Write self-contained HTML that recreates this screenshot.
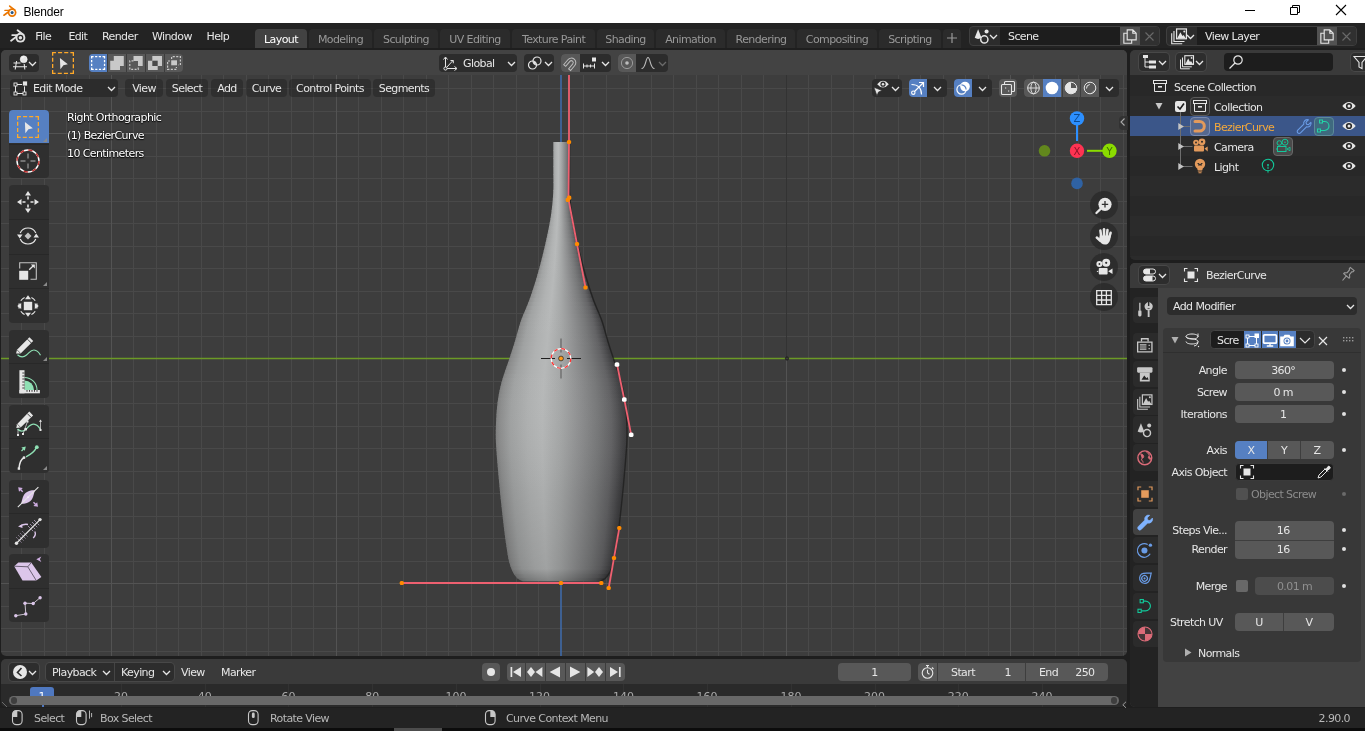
<!DOCTYPE html>
<html lang="en"><head><meta charset="utf-8"><title>Blender</title>
<style>
html,body{margin:0;padding:0;background:#1e1e1e;}
#r{position:relative;will-change:transform;width:1365px;height:731px;overflow:hidden;background:#1e1e1e;font-family:"DejaVu Sans","Liberation Sans",sans-serif;font-size:11px;letter-spacing:-0.6px;color:#e6e6e6;}
#r div,#r svg{position:absolute;box-sizing:border-box;}
#r svg{overflow:visible;}
.t{white-space:nowrap;line-height:16px;height:16px;}
.ts{white-space:nowrap;line-height:16px;height:16px;text-shadow:0 1px 1px rgba(0,0,0,.9),0 0 2px rgba(0,0,0,.8);}
.b{border-radius:4px;}
.c{text-align:center;}
.r{text-align:right;}
</style></head>
<body><div id="r">
<div style="left:0px;top:0px;width:1365px;height:23px;background:#fff;"></div>
<svg style="left:3px;top:5px;" width="14.5" height="12.8" viewBox="0 0 17 15"><g fill="none" stroke="#ea7600" stroke-linecap="round"><path d="M7.800 1.300L13.800 6" stroke-width="1.900"/><path d="M2.200 6.300H9" stroke-width="1.700"/><path d="M1.100 12L7.500 7.300" stroke-width="1.900"/></g>
<circle cx="10.700" cy="8.900" r="5.100" fill="#ea7600"/><circle cx="10.700" cy="8.900" r="3.100" fill="#ffffff"/><circle cx="10.700" cy="8.900" r="1.800" fill="#265787"/></svg>
<div class="t" style="left:23.5px;top:4px;color:#000;font-family:'Liberation Sans',sans-serif;font-size:12px;letter-spacing:-0.2px;">Blender</div>
<svg style="left:1245px;top:10px;" width="10" height="1" viewBox="0 0 10 1"><rect width="10" height="1" fill="#000"/></svg>
<svg style="left:1290px;top:5px;" width="10" height="10" viewBox="0 0 10 10"><path d="M0.5 2.5h7v7h-7z M2.5 2.5v-2h7v7h-2" fill="none" stroke="#000" stroke-width="1"/></svg>
<svg style="left:1336px;top:5px;" width="10" height="10" viewBox="0 0 10 10"><path d="M0 0L10 10M10 0L0 10" fill="none" stroke="#000" stroke-width="1.1"/></svg>
<div style="left:0px;top:23px;width:1365px;height:25px;background:#232323;"></div>
<svg style="left:9.6px;top:28.8px;" width="16.5" height="14.6" viewBox="0 0 17 15"><g fill="none" stroke="#e0e0e0" stroke-linecap="round"><path d="M7.800 1.300L13.800 6" stroke-width="1.900"/><path d="M2.200 6.300H9" stroke-width="1.700"/><path d="M1.100 12L7.500 7.300" stroke-width="1.900"/></g>
<circle cx="10.700" cy="8.900" r="5.100" fill="#e0e0e0"/><circle cx="10.700" cy="8.900" r="3.100" fill="#232323"/><circle cx="10.700" cy="8.900" r="1.800" fill="#e0e0e0"/></svg>
<div class="t" style="left:35.2px;top:29px;">File</div>
<div class="t" style="left:68.4px;top:29px;">Edit</div>
<div class="t" style="left:102px;top:29px;">Render</div>
<div class="t" style="left:152px;top:29px;">Window</div>
<div class="t" style="left:206.5px;top:29px;">Help</div>
<div style="left:255px;top:29px;width:52px;height:19px;background:#424242;border-radius:4px 4px 0 0;"></div>
<div class="t" style="left:255px;top:32px;width:52px;text-align:center;color:#ffffff;">Layout</div>
<div style="left:309px;top:29px;width:63px;height:19px;background:#2b2b2b;border-radius:4px 4px 0 0;"></div>
<div class="t" style="left:309px;top:32px;width:63px;text-align:center;color:#989898;">Modeling</div>
<div style="left:374px;top:29px;width:64px;height:19px;background:#2b2b2b;border-radius:4px 4px 0 0;"></div>
<div class="t" style="left:374px;top:32px;width:64px;text-align:center;color:#989898;">Sculpting</div>
<div style="left:440px;top:29px;width:70px;height:19px;background:#2b2b2b;border-radius:4px 4px 0 0;"></div>
<div class="t" style="left:440px;top:32px;width:70px;text-align:center;color:#989898;">UV Editing</div>
<div style="left:512px;top:29px;width:83px;height:19px;background:#2b2b2b;border-radius:4px 4px 0 0;"></div>
<div class="t" style="left:512px;top:32px;width:83px;text-align:center;color:#989898;">Texture Paint</div>
<div style="left:597px;top:29px;width:57px;height:19px;background:#2b2b2b;border-radius:4px 4px 0 0;"></div>
<div class="t" style="left:597px;top:32px;width:57px;text-align:center;color:#989898;">Shading</div>
<div style="left:656px;top:29px;width:69px;height:19px;background:#2b2b2b;border-radius:4px 4px 0 0;"></div>
<div class="t" style="left:656px;top:32px;width:69px;text-align:center;color:#989898;">Animation</div>
<div style="left:727px;top:29px;width:68px;height:19px;background:#2b2b2b;border-radius:4px 4px 0 0;"></div>
<div class="t" style="left:727px;top:32px;width:68px;text-align:center;color:#989898;">Rendering</div>
<div style="left:797px;top:29px;width:80px;height:19px;background:#2b2b2b;border-radius:4px 4px 0 0;"></div>
<div class="t" style="left:797px;top:32px;width:80px;text-align:center;color:#989898;">Compositing</div>
<div style="left:879px;top:29px;width:62px;height:19px;background:#2b2b2b;border-radius:4px 4px 0 0;"></div>
<div class="t" style="left:879px;top:32px;width:62px;text-align:center;color:#989898;">Scripting</div>
<div style="left:943px;top:29px;width:18px;height:19px;background:#2b2b2b;border-radius:4px 4px 0 0;"></div>
<svg style="left:947px;top:33px;" width="10" height="10" viewBox="0 0 10 10"><path d="M5 0v10M0 5h10" stroke="#989898" stroke-width="1.2" fill="none"/></svg>
<div style="left:969px;top:26px;width:191px;height:20px;background:#2c2c2c;border-radius:4px;border:1px solid #3f3f3f;"></div>
<div style="left:1000px;top:27px;width:120px;height:18px;background:#1d1d1d;"></div>
<div style="left:1120px;top:27px;width:20px;height:18px;background:#525252;"></div>
<div style="left:1140px;top:27px;width:19px;height:18px;background:#303030;border-radius:0 3px 3px 0;"></div>
<div style="left:0;top:0;width:0;height:0;transform-origin:981.5px 35.5px;transform:scale(1.13);"><svg style="left:973.5px;top:27.5px;" width="16" height="16" viewBox="0 0 16 16">
<path d="M4.5 2 L7.5 9.5 Q4.5 11.5 1.5 9.5 Z" fill="#e6e6e6"/>
<circle cx="10" cy="11" r="3.2" fill="none" stroke="#e6e6e6" stroke-width="1.3"/>
<circle cx="12" cy="4" r="1.8" fill="#e6e6e6"/></svg></div>
<svg style="left:989px;top:34px;" width="9" height="6" viewBox="0 0 9 6"><path d="M1 1 L4.5 4.5 L8 1" fill="none" stroke="#e6e6e6" stroke-width="1.3"/></svg>
<div class="t" style="left:1008px;top:29px;">Scene</div>
<div style="left:0;top:0;width:0;height:0;transform-origin:1130px 36px;transform:scale(1.12);"><svg style="left:1122px;top:28px;" width="16" height="16" viewBox="0 0 16 16">
<path d="M5.5 2.5h5l3 3v6h-8z M10.5 2.5v3h3" fill="none" stroke="#e6e6e6" stroke-width="1"/>
<path d="M5.5 5.5h-3v9h7v-3" fill="none" stroke="#e6e6e6" stroke-width="1"/></svg></div>
<svg style="left:1145px;top:32px;" width="9" height="9" viewBox="0 0 9 9"><path d="M0.5 0.5L8.5 8.5M8.5 0.5L0.5 8.5" stroke="#6a6a6a" stroke-width="1.1" fill="none"/></svg>
<div style="left:1166px;top:26px;width:191px;height:20px;background:#2c2c2c;border-radius:4px;border:1px solid #3f3f3f;"></div>
<div style="left:1197px;top:27px;width:120px;height:18px;background:#1d1d1d;"></div>
<div style="left:1317px;top:27px;width:20px;height:18px;background:#525252;"></div>
<div style="left:1337px;top:27px;width:19px;height:18px;background:#303030;border-radius:0 3px 3px 0;"></div>
<div style="left:0;top:0;width:0;height:0;transform-origin:1178.5px 35.5px;transform:scale(1.13);"><svg style="left:1170.5px;top:27.5px;" width="16" height="16" viewBox="0 0 16 16">
<path d="M1.500 5.500v9.300h9.300M3.500 3.500v9.300h9.300" fill="none" stroke="#e6e6e6" stroke-width="1"/>
<rect x="5.800" y="1.700" width="8.700" height="8.700" fill="#2d2d2d" stroke="#e6e6e6" stroke-width="1.100"/>
<path d="M6.400 10L9.200 4.600L11 8L12 7L13.900 10Z" fill="#e6e6e6"/><circle cx="12.600" cy="3.900" r="0.900" fill="#e6e6e6"/></svg></div>
<svg style="left:1186px;top:34px;" width="9" height="6" viewBox="0 0 9 6"><path d="M1 1 L4.5 4.5 L8 1" fill="none" stroke="#e6e6e6" stroke-width="1.3"/></svg>
<div class="t" style="left:1205px;top:29px;">View Layer</div>
<div style="left:0;top:0;width:0;height:0;transform-origin:1327px 36px;transform:scale(1.12);"><svg style="left:1319px;top:28px;" width="16" height="16" viewBox="0 0 16 16">
<path d="M5.5 2.5h5l3 3v6h-8z M10.5 2.5v3h3" fill="none" stroke="#e6e6e6" stroke-width="1"/>
<path d="M5.5 5.5h-3v9h7v-3" fill="none" stroke="#e6e6e6" stroke-width="1"/></svg></div>
<svg style="left:1342px;top:32px;" width="9" height="9" viewBox="0 0 9 9"><path d="M0.5 0.5L8.5 8.5M8.5 0.5L0.5 8.5" stroke="#6a6a6a" stroke-width="1.1" fill="none"/></svg>
<div style="left:1px;top:50px;width:1126px;height:606px;background:#3d3d3d;border-radius:5px;overflow:hidden;">
<svg style="left:0;top:0" width="1126" height="606" viewBox="1 50 1126 606"><path d="M21.5 50V656M44.5 50V656M66.5 50V656M89.5 50V656M133.5 50V656M156.5 50V656M178.5 50V656M201.5 50V656M223.5 50V656M246.5 50V656M268.5 50V656M291.5 50V656M1 88.5H1127M313.5 50V656M1 111.5H1127M358.5 50V656M1 156.5H1127M381.5 50V656M1 178.5H1127M403.5 50V656M1 201.5H1127M426.5 50V656M1 223.5H1127M448.5 50V656M1 246.5H1127M471.5 50V656M1 268.5H1127M493.5 50V656M1 291.5H1127M516.5 50V656M1 313.5H1127M538.5 50V656M1 336.5H1127M583.5 50V656M1 381.5H1127M606.5 50V656M1 403.5H1127M628.5 50V656M1 426.5H1127M651.5 50V656M1 448.5H1127M673.5 50V656M1 471.5H1127M696.5 50V656M1 493.5H1127M718.5 50V656M1 516.5H1127M741.5 50V656M1 538.5H1127M763.5 50V656M1 561.5H1127M808.5 50V656M1 606.5H1127M831.5 50V656M1 628.5H1127M853.5 50V656M1 651.5H1127M875.5 50V656M898.5 50V656M920.5 50V656M943.5 50V656M965.5 50V656M988.5 50V656M1033.5 50V656M1055.5 50V656M1078.5 50V656M1100.5 50V656M1123.5 50V656" stroke="#494949" stroke-width="1" fill="none"/><path d="M111.5 50V656M336.5 50V656M1 133.5H1127M786.5 50V656M1 583.5H1127M1010.5 50V656" stroke="#535353" stroke-width="1" fill="none"/><path d="M786.5 75V358" stroke="#333333" stroke-width="1" fill="none"/><path d="M1 358.5H1127" stroke="#6c9a26" stroke-width="1.6" fill="none"/><path d="M561 75V656" stroke="#3f6aa8" stroke-width="1.6" fill="none"/><circle cx="787" cy="358.5" r="1.6" fill="#3d3d3d" stroke="#1a1a1a" stroke-width="0.9"/><defs>
<linearGradient id="vg" x1="0" x2="1" y1="0" y2="0">
<stop offset="0" stop-color="#7a7b7b"/><stop offset="0.04" stop-color="#8c8d8d"/><stop offset="0.12" stop-color="#a0a2a2"/><stop offset="0.25" stop-color="#afb1b1"/>
<stop offset="0.36" stop-color="#b6b8b8"/><stop offset="0.5" stop-color="#a5a7a7"/><stop offset="0.65" stop-color="#8c8d8e"/><stop offset="0.78" stop-color="#767778"/>
<stop offset="0.88" stop-color="#626264"/><stop offset="0.93" stop-color="#505052"/><stop offset="0.965" stop-color="#424244"/><stop offset="1" stop-color="#38383a"/>
</linearGradient>
<linearGradient id="vg2" x1="0" x2="0" y1="0" y2="1">
<stop offset="0" stop-color="#fff" stop-opacity="0.05"/><stop offset="0.5" stop-color="#fff" stop-opacity="0"/>
<stop offset="0.8" stop-color="#000" stop-opacity="0.06"/><stop offset="0.97" stop-color="#000" stop-opacity="0.12"/><stop offset="1" stop-color="#000" stop-opacity="0.3"/>
</linearGradient>
<clipPath id="vc"><path d="M568.7 142.0 C568.7 146.7 568.7 161.5 568.7 170.0 C568.7 178.5 568.4 185.5 568.8 193.0 C569.2 200.5 570.0 208.2 571.0 215.0 C572.0 221.8 573.1 227.3 574.5 234.0 C575.9 240.7 577.5 247.8 579.3 255.0 C581.1 262.2 583.0 269.5 585.2 277.0 C587.4 284.5 590.1 292.8 592.7 300.0 C595.3 307.2 598.6 313.7 601.0 320.5 C603.4 327.3 605.1 334.7 607.0 341.0 C608.9 347.3 610.4 351.7 612.6 358.5 C614.8 365.3 618.4 374.6 620.4 382.0 C622.4 389.4 623.6 395.9 624.5 402.7 C625.4 409.5 625.8 416.2 626.0 423.0 C626.2 429.8 626.5 434.2 626.0 443.7 C625.5 453.2 624.1 468.5 623.1 480.0 C622.1 491.5 621.0 501.9 619.8 512.8 C618.6 523.7 616.9 537.4 615.7 545.6 C614.5 553.8 613.9 557.6 612.8 562.0 C611.7 566.4 610.6 569.1 609.2 571.9 C607.8 574.6 605.9 576.9 604.3 578.5 C602.6 580.1 600.1 580.8 599.3 581.3 L522.7 581.3 C521.9 580.8 519.4 580.1 517.7 578.5 C516.1 576.9 514.2 574.6 512.8 571.9 C511.4 569.1 510.3 566.4 509.2 562.0 C508.1 557.6 507.5 553.8 506.3 545.6 C505.1 537.4 503.4 523.7 502.2 512.8 C501.0 501.9 499.9 491.5 498.9 480.0 C497.9 468.5 496.5 453.2 496.0 443.7 C495.5 434.2 495.8 429.8 496.0 423.0 C496.2 416.2 496.6 409.5 497.5 402.7 C498.4 395.9 499.6 389.4 501.6 382.0 C503.6 374.6 507.2 365.3 509.4 358.5 C511.6 351.7 513.1 347.3 515.0 341.0 C516.9 334.7 518.6 327.3 521.0 320.5 C523.4 313.7 526.7 307.2 529.3 300.0 C531.9 292.8 534.6 284.5 536.8 277.0 C539.0 269.5 540.9 262.2 542.7 255.0 C544.5 247.8 546.1 240.7 547.5 234.0 C548.9 227.3 550.0 221.8 551.0 215.0 C552.0 208.2 552.8 200.5 553.2 193.0 C553.6 185.5 553.3 178.5 553.3 170.0 C553.3 161.5 553.3 146.7 553.3 142.0 Z"/></clipPath>
</defs><g clip-path="url(#vc)"><rect x="551.8" y="142" width="18.4" height="8.6" fill="url(#vg)"/><rect x="551.8" y="150" width="18.4" height="8.6" fill="url(#vg)"/><rect x="551.8" y="158" width="18.4" height="8.6" fill="url(#vg)"/><rect x="551.8" y="166" width="18.4" height="8.6" fill="url(#vg)"/><rect x="551.7" y="174" width="18.5" height="8.6" fill="url(#vg)"/><rect x="551.7" y="182" width="18.6" height="8.6" fill="url(#vg)"/><rect x="551.2" y="190" width="19.6" height="8.6" fill="url(#vg)"/><rect x="550.4" y="198" width="21.2" height="8.6" fill="url(#vg)"/><rect x="550.0" y="206" width="22.0" height="4.6" fill="url(#vg)"/><rect x="549.6" y="210" width="22.8" height="4.6" fill="url(#vg)"/><rect x="548.9" y="214" width="24.1" height="4.6" fill="url(#vg)"/><rect x="548.2" y="218" width="25.6" height="4.6" fill="url(#vg)"/><rect x="547.5" y="222" width="27.1" height="4.6" fill="url(#vg)"/><rect x="546.7" y="226" width="28.5" height="4.6" fill="url(#vg)"/><rect x="546.0" y="230" width="30.0" height="4.6" fill="url(#vg)"/><rect x="545.1" y="234" width="31.8" height="4.6" fill="url(#vg)"/><rect x="544.2" y="238" width="33.7" height="4.6" fill="url(#vg)"/><rect x="543.3" y="242" width="35.5" height="4.6" fill="url(#vg)"/><rect x="542.3" y="246" width="37.3" height="4.6" fill="url(#vg)"/><rect x="541.4" y="250" width="39.1" height="4.6" fill="url(#vg)"/><rect x="540.4" y="254" width="41.2" height="4.6" fill="url(#vg)"/><rect x="539.3" y="258" width="43.4" height="4.6" fill="url(#vg)"/><rect x="538.2" y="262" width="45.5" height="4.6" fill="url(#vg)"/><rect x="537.2" y="266" width="47.6" height="4.6" fill="url(#vg)"/><rect x="536.1" y="270" width="49.8" height="4.6" fill="url(#vg)"/><rect x="535.0" y="274" width="52.1" height="4.6" fill="url(#vg)"/><rect x="533.7" y="278" width="54.7" height="4.6" fill="url(#vg)"/><rect x="532.4" y="282" width="57.3" height="4.6" fill="url(#vg)"/><rect x="531.1" y="286" width="59.9" height="4.6" fill="url(#vg)"/><rect x="529.8" y="290" width="62.5" height="4.6" fill="url(#vg)"/><rect x="528.5" y="294" width="65.1" height="4.6" fill="url(#vg)"/><rect x="527.0" y="298" width="68.0" height="4.6" fill="url(#vg)"/><rect x="525.4" y="302" width="71.3" height="4.6" fill="url(#vg)"/><rect x="523.8" y="306" width="74.5" height="4.6" fill="url(#vg)"/><rect x="522.1" y="310" width="77.7" height="4.6" fill="url(#vg)"/><rect x="520.5" y="314" width="81.0" height="4.6" fill="url(#vg)"/><rect x="519.1" y="318" width="83.9" height="4.6" fill="url(#vg)"/><rect x="517.9" y="322" width="86.2" height="4.6" fill="url(#vg)"/><rect x="516.7" y="326" width="88.6" height="4.6" fill="url(#vg)"/><rect x="515.5" y="330" width="90.9" height="4.6" fill="url(#vg)"/><rect x="514.4" y="334" width="93.2" height="4.6" fill="url(#vg)"/><rect x="513.2" y="338" width="95.6" height="4.6" fill="url(#vg)"/><rect x="511.9" y="342" width="98.2" height="4.6" fill="url(#vg)"/><rect x="510.6" y="346" width="100.8" height="4.6" fill="url(#vg)"/><rect x="509.3" y="350" width="103.3" height="4.6" fill="url(#vg)"/><rect x="508.1" y="354" width="105.9" height="4.6" fill="url(#vg)"/><rect x="506.7" y="358" width="108.5" height="4.6" fill="url(#vg)"/><rect x="505.4" y="362" width="111.2" height="4.6" fill="url(#vg)"/><rect x="504.1" y="366" width="113.8" height="4.6" fill="url(#vg)"/><rect x="502.8" y="370" width="116.5" height="4.6" fill="url(#vg)"/><rect x="501.4" y="374" width="119.1" height="4.6" fill="url(#vg)"/><rect x="500.1" y="378" width="121.8" height="4.6" fill="url(#vg)"/><rect x="499.3" y="382" width="123.4" height="4.6" fill="url(#vg)"/><rect x="498.5" y="386" width="125.0" height="4.6" fill="url(#vg)"/><rect x="497.7" y="390" width="126.6" height="4.6" fill="url(#vg)"/><rect x="496.9" y="394" width="128.1" height="4.6" fill="url(#vg)"/><rect x="496.1" y="398" width="129.7" height="4.6" fill="url(#vg)"/><rect x="495.8" y="402" width="130.5" height="4.6" fill="url(#vg)"/><rect x="495.5" y="406" width="131.1" height="4.6" fill="url(#vg)"/><rect x="495.2" y="410" width="131.7" height="4.6" fill="url(#vg)"/><rect x="494.9" y="414" width="132.3" height="4.6" fill="url(#vg)"/><rect x="494.6" y="418" width="132.9" height="4.6" fill="url(#vg)"/><rect x="494.5" y="422" width="133.0" height="4.6" fill="url(#vg)"/><rect x="494.5" y="426" width="133.0" height="4.6" fill="url(#vg)"/><rect x="494.5" y="430" width="133.0" height="4.6" fill="url(#vg)"/><rect x="494.5" y="434" width="133.0" height="4.6" fill="url(#vg)"/><rect x="494.5" y="438" width="133.0" height="4.6" fill="url(#vg)"/><rect x="494.5" y="442" width="133.0" height="4.6" fill="url(#vg)"/><rect x="494.7" y="446" width="132.6" height="4.6" fill="url(#vg)"/><rect x="495.0" y="450" width="132.0" height="4.6" fill="url(#vg)"/><rect x="495.3" y="454" width="131.4" height="4.6" fill="url(#vg)"/><rect x="495.6" y="458" width="130.7" height="4.6" fill="url(#vg)"/><rect x="496.0" y="462" width="130.1" height="4.6" fill="url(#vg)"/><rect x="496.3" y="466" width="129.4" height="4.6" fill="url(#vg)"/><rect x="496.6" y="470" width="128.8" height="4.6" fill="url(#vg)"/><rect x="496.9" y="474" width="128.2" height="4.6" fill="url(#vg)"/><rect x="497.2" y="478" width="127.5" height="4.6" fill="url(#vg)"/><rect x="497.6" y="482" width="126.8" height="4.6" fill="url(#vg)"/><rect x="498.0" y="486" width="126.0" height="4.6" fill="url(#vg)"/><rect x="498.4" y="490" width="125.2" height="4.6" fill="url(#vg)"/><rect x="498.8" y="494" width="124.4" height="4.6" fill="url(#vg)"/><rect x="499.2" y="498" width="123.6" height="4.6" fill="url(#vg)"/><rect x="499.6" y="502" width="122.8" height="4.6" fill="url(#vg)"/><rect x="500.0" y="506" width="122.0" height="4.6" fill="url(#vg)"/><rect x="500.4" y="510" width="121.2" height="4.6" fill="url(#vg)"/><rect x="500.9" y="514" width="120.3" height="4.6" fill="url(#vg)"/><rect x="501.4" y="518" width="119.3" height="4.6" fill="url(#vg)"/><rect x="501.9" y="522" width="118.3" height="4.6" fill="url(#vg)"/><rect x="502.4" y="526" width="117.3" height="4.6" fill="url(#vg)"/><rect x="502.9" y="530" width="116.3" height="4.6" fill="url(#vg)"/><rect x="503.4" y="534" width="115.3" height="4.6" fill="url(#vg)"/><rect x="503.9" y="538" width="114.3" height="4.6" fill="url(#vg)"/><rect x="504.4" y="542" width="113.3" height="4.6" fill="url(#vg)"/><rect x="504.9" y="546" width="112.3" height="4.6" fill="url(#vg)"/><rect x="505.6" y="550" width="110.8" height="4.6" fill="url(#vg)"/><rect x="506.3" y="554" width="109.4" height="4.6" fill="url(#vg)"/><rect x="507.0" y="558" width="108.0" height="4.6" fill="url(#vg)"/><rect x="507.7" y="562" width="106.6" height="4.6" fill="url(#vg)"/><rect x="509.2" y="566" width="103.7" height="4.6" fill="url(#vg)"/><rect x="510.6" y="570" width="100.8" height="4.6" fill="url(#vg)"/><rect x="512.9" y="574" width="96.3" height="4.6" fill="url(#vg)"/><rect x="515.8" y="578" width="90.3" height="4.6" fill="url(#vg)"/><rect x="480" y="142" width="160" height="440" fill="url(#vg2)"/></g><path d="M568.7 142.0 C568.7 146.7 568.7 161.5 568.7 170.0 C568.7 178.5 568.4 185.5 568.8 193.0 C569.2 200.5 570.0 208.2 571.0 215.0 C572.0 221.8 573.1 227.3 574.5 234.0 C575.9 240.7 577.5 247.8 579.3 255.0 C581.1 262.2 583.0 269.5 585.2 277.0 C587.4 284.5 590.1 292.8 592.7 300.0 C595.3 307.2 598.6 313.7 601.0 320.5 C603.4 327.3 605.1 334.7 607.0 341.0 C608.9 347.3 610.4 351.7 612.6 358.5 C614.8 365.3 618.4 374.6 620.4 382.0 C622.4 389.4 623.6 395.9 624.5 402.7 C625.4 409.5 625.8 416.2 626.0 423.0 C626.2 429.8 626.5 434.2 626.0 443.7 C625.5 453.2 624.1 468.5 623.1 480.0 C622.1 491.5 621.0 501.9 619.8 512.8 C618.6 523.7 616.9 537.4 615.7 545.6 C614.5 553.8 613.9 557.6 612.8 562.0 C611.7 566.4 610.6 569.1 609.2 571.9 C607.8 574.6 605.9 576.9 604.3 578.5 C602.6 580.1 600.1 580.8 599.3 581.3" fill="none" stroke="#1c1c1c" stroke-width="1.4" opacity="0.75" transform="translate(0.8,0)"/><path d="M569 75 L569 142 L568.5 199.5" fill="none" stroke="#ee6070" stroke-width="1.8" stroke-linejoin="round"/><path d="M568.5 199.5 L577 244 L585.5 287.5" fill="none" stroke="#ee6070" stroke-width="1.8" stroke-linejoin="round"/><path d="M617 364.5 L624.3 399.5 L631.2 434.8" fill="none" stroke="#ee6070" stroke-width="1.8" stroke-linejoin="round"/><path d="M619.3 528 L614 558 L608.7 588" fill="none" stroke="#ee6070" stroke-width="1.8" stroke-linejoin="round"/><path d="M401.8 583 H601.3" fill="none" stroke="#ee6070" stroke-width="1.8" stroke-linejoin="round"/><rect x="566.9" y="139.9" width="4.2" height="4.2" rx="1.5" fill="#ff8a00"/><rect x="567.1" y="195.5" width="4.2" height="4.2" rx="1.5" fill="#ff8a00"/><rect x="565.6999999999999" y="197.70000000000002" width="4.2" height="4.2" rx="1.5" fill="#ff8a00"/><rect x="574.9" y="241.9" width="4.2" height="4.2" rx="1.5" fill="#ff8a00"/><rect x="583.4" y="285.4" width="4.2" height="4.2" rx="1.5" fill="#ff8a00"/><rect x="617.1999999999999" y="525.9" width="4.2" height="4.2" rx="1.5" fill="#ff8a00"/><rect x="611.9" y="555.9" width="4.2" height="4.2" rx="1.5" fill="#ff8a00"/><rect x="606.6" y="585.9" width="4.2" height="4.2" rx="1.5" fill="#ff8a00"/><rect x="399.7" y="580.9" width="4.2" height="4.2" rx="1.5" fill="#ff8a00"/><rect x="558.9" y="580.9" width="4.2" height="4.2" rx="1.5" fill="#ff8a00"/><rect x="599.1999999999999" y="580.9" width="4.2" height="4.2" rx="1.5" fill="#ff8a00"/><rect x="614.7" y="362.2" width="4.6" height="4.6" rx="1.6" fill="#ffffff"/><rect x="622.0" y="397.2" width="4.6" height="4.6" rx="1.6" fill="#ffffff"/><rect x="628.9000000000001" y="432.5" width="4.6" height="4.6" rx="1.6" fill="#ffffff"/><g fill="none"><path d="M541 358.5h14M567 358.5h14" stroke="#1e1e1e" stroke-width="1"/><path d="M561 338.5v14M561 364.5v14" stroke="#6e6e6e" stroke-width="1.4"/><circle cx="561" cy="358.5" r="9.8" stroke="#ffffff" stroke-width="1.3"/><circle cx="561" cy="358.5" r="9.8" stroke="#ff3030" stroke-width="1.3" stroke-dasharray="3.85 3.85"/><circle cx="561" cy="358.5" r="2.4" fill="#ff9a1a" stroke="#30302e" stroke-width="0.8"/></g></svg>
<div style="left:0;top:0;width:1126px;height:25px;background:#434343;"></div>
</div>
<div style="left:9px;top:54px;width:30px;height:18px;background:#2c2c2c;border-radius:4px;"></div>
<svg style="left:12px;top:55px;" width="16" height="16" viewBox="0 0 16 16"><path d="M1.500 8h7M1 11.800h14M4.600 6L3.200 14.500M12.200 9l.6 5.500" stroke="#e6e6e6" stroke-width="1.100" fill="none"/>
<circle cx="11.700" cy="4.300" r="3.500" fill="#e6e6e6"/><path d="M9.800 3.800a2 2 0 0 1 2-1.700" stroke="#fff" stroke-width="0.800" fill="none"/><circle cx="11.700" cy="4.300" r="3.500" fill="none" stroke="#fff" stroke-width="0.500"/></svg>
<svg style="left:28px;top:61px;" width="9" height="6" viewBox="0 0 9 6"><path d="M1 1 L4.5 4.5 L8 1" fill="none" stroke="#e6e6e6" stroke-width="1.3"/></svg>
<svg style="left:52px;top:52px;" width="22" height="22" viewBox="0 0 22 22"><path d="M0 0.65H22M21.35 0V22M22 21.35H0M0.65 22V0" fill="none" stroke="#ffa928" stroke-width="1.3" stroke-dasharray="3.95 2.1 4.05 2.1 4.05 2.1 3.95"/>
<path d="M7.92 5.94 L15.84 12.32 L11.440000000000001 13.2 L8.36 17.16Z" fill="#e6e6e6"/></svg>
<div style="left:89px;top:54px;width:94px;height:18px;background:#585858;border-radius:4px;"></div>
<div style="left:89px;top:54px;width:18.5px;height:18px;background:#5680c2;border-radius:4px 0 0 4px;"></div>
<div style="left:106.5px;top:54px;width:1px;height:18px;background:#3c3c3c;"></div>
<div style="left:125.5px;top:54px;width:1px;height:18px;background:#3c3c3c;"></div>
<div style="left:144.5px;top:54px;width:1px;height:18px;background:#3c3c3c;"></div>
<div style="left:163.5px;top:54px;width:1px;height:18px;background:#3c3c3c;"></div>
<svg style="left:89px;top:54px;" width="95" height="18" viewBox="0 0 95 18"><path d="M2 2.650H16.200M15.550 2V16M16.200 15.350H2M2.650 16V2" fill="none" stroke="#fff" stroke-width="1.300" stroke-dasharray="2.600 1.500 2.200 1.500 2.200 1.500 2.700"/><path d="M24.800 2h10v10h-3.800v4h-9.800v-9.300h3.600z" fill="#c8c8c8"/><path d="M44.500 2h9.200v10h-4.700v-5h-4.500z" fill="#c8c8c8"/><path d="M44.500 6.900H40.800V15.400H49.200V12.500" fill="none" stroke="#c8c8c8" stroke-width="1.200" stroke-dasharray="2 1.400"/><path d="M63.300 2h9.700v10h-4.300v4h-9.700v-9.300h4.300z" fill="#c8c8c8"/><rect x="63.300" y="6.700" width="5.400" height="5.300" fill="#4a4a4a"/><rect x="82.200" y="6.300" width="5.800" height="5" fill="#c8c8c8"/><path d="M82.600 5V2.600H91.400V11H89.500M81 7H78.600V15.400H87.400V13" fill="none" stroke="#c8c8c8" stroke-width="1.200" stroke-dasharray="2.100 1.400"/></svg>
<div style="left:439px;top:54px;width:78px;height:18px;background:#2c2c2c;border-radius:4px;"></div>
<svg style="left:441px;top:55px;" width="18" height="16" viewBox="0 0 18 16"><path d="M4.5 13.5V2.5M2.5 4.5l2-2.5l2 2.5M4.5 13.5H15.5M13.5 11.5l2.5 2l-2.5 2M5.5 12.5L12 5.5M9.5 5.5h2.8v2.8" fill="none" stroke="#e6e6e6" stroke-width="1"/>
<circle cx="4.5" cy="13.5" r="1.6" fill="#2c2c2c" stroke="#e6e6e6" stroke-width="1"/></svg>
<div class="t" style="left:463px;top:56px;">Global</div>
<svg style="left:506.5px;top:61px;" width="9" height="6" viewBox="0 0 9 6"><path d="M1 1 L4.5 4.5 L8 1" fill="none" stroke="#e6e6e6" stroke-width="1.3"/></svg>
<div style="left:524px;top:54px;width:30px;height:18px;background:#2c2c2c;border-radius:4px;"></div>
<svg style="left:527px;top:55px;" width="16" height="16" viewBox="0 0 16 16"><circle cx="5.5" cy="10" r="4" fill="none" stroke="#e6e6e6" stroke-width="1.2"/><circle cx="10" cy="6" r="4" fill="none" stroke="#e6e6e6" stroke-width="1.2"/><circle cx="7.8" cy="8" r="1.2" fill="#e6e6e6"/></svg>
<svg style="left:544px;top:61px;" width="9" height="6" viewBox="0 0 9 6"><path d="M1 1 L4.5 4.5 L8 1" fill="none" stroke="#e6e6e6" stroke-width="1.3"/></svg>
<div style="left:561px;top:54px;width:50px;height:18px;background:#2c2c2c;border-radius:4px;"></div>
<div style="left:561px;top:54px;width:19px;height:18px;background:#585858;border-radius:4px 0 0 4px;"></div>
<svg style="left:563px;top:55px;" width="16" height="16" viewBox="0 0 16 16"><g transform="rotate(40 8 8)"><path d="M3.5 14V7.5a4.5 4.5 0 0 1 9 0V14h-2.6V7.5a1.9 1.9 0 0 0-3.8 0V14Z" fill="none" stroke="#bdbdbd" stroke-width="1"/></g></svg>
<svg style="left:582px;top:55px;" width="16" height="16" viewBox="0 0 16 16"><path d="M1 11h12M1.5 8.5v5M5 9.5v3M8.5 9.5v3M12.5 8.5v5" stroke="#e6e6e6" stroke-width="1" fill="none"/><rect x="10" y="2.5" width="4" height="4" fill="#e6e6e6"/></svg>
<svg style="left:601px;top:61px;" width="9" height="6" viewBox="0 0 9 6"><path d="M1 1 L4.5 4.5 L8 1" fill="none" stroke="#e6e6e6" stroke-width="1.3"/></svg>
<div style="left:618px;top:54px;width:50px;height:18px;background:#2c2c2c;border-radius:4px;"></div>
<div style="left:618px;top:54px;width:18px;height:18px;background:#585858;border-radius:4px 0 0 4px;"></div>
<svg style="left:619px;top:55px;" width="16" height="16" viewBox="0 0 16 16"><circle cx="8" cy="8" r="5.6" fill="none" stroke="#9a9a9a" stroke-width="1"/><circle cx="8" cy="8" r="1.8" fill="#bdbdbd"/></svg>
<svg style="left:641px;top:56px;" width="14" height="14" viewBox="0 0 14 14"><path d="M0.5 12.5C5 12.5 4.5 1.5 7 1.5S9 12.5 13.5 12.5" fill="none" stroke="#bdbdbd" stroke-width="1.1"/></svg>
<svg style="left:658px;top:61px;" width="9" height="6" viewBox="0 0 9 6"><path d="M1 1 L4.5 4.5 L8 1" fill="none" stroke="#6a6a6a" stroke-width="1.3"/></svg>
<div style="left:10px;top:79px;width:108px;height:18px;background:#2c2c2c;border-radius:4px;"></div>
<svg style="left:13px;top:80px;" width="16" height="16" viewBox="0 0 16 16"><rect x="2.5" y="4.5" width="9" height="9" fill="none" stroke="#e6e6e6" stroke-width="1"/>
<rect x="1" y="3" width="3" height="3" fill="#2c2c2c" stroke="#e6e6e6" stroke-width="0.9"/><rect x="1" y="12" width="3" height="3" fill="#2c2c2c" stroke="#e6e6e6" stroke-width="0.9"/><rect x="10" y="12" width="3" height="3" fill="#2c2c2c" stroke="#e6e6e6" stroke-width="0.9"/>
<rect x="9.5" y="1" width="5" height="5" fill="#e6e6e6" stroke="#2c2c2c" stroke-width="0.8"/></svg>
<div class="t" style="left:33px;top:81px;">Edit Mode</div>
<svg style="left:107px;top:86px;" width="9" height="6" viewBox="0 0 9 6"><path d="M1 1 L4.5 4.5 L8 1" fill="none" stroke="#e6e6e6" stroke-width="1.3"/></svg>
<div style="left:125px;top:79px;width:38px;height:18px;background:rgba(36,36,36,0.55);border-radius:4px;"></div>
<div class="t" style="left:125px;top:81px;width:38px;text-align:center;">View</div>
<div style="left:166px;top:79px;width:42px;height:18px;background:rgba(36,36,36,0.55);border-radius:4px;"></div>
<div class="t" style="left:166px;top:81px;width:42px;text-align:center;">Select</div>
<div style="left:211px;top:79px;width:32px;height:18px;background:rgba(36,36,36,0.55);border-radius:4px;"></div>
<div class="t" style="left:211px;top:81px;width:32px;text-align:center;">Add</div>
<div style="left:246px;top:79px;width:41px;height:18px;background:rgba(36,36,36,0.55);border-radius:4px;"></div>
<div class="t" style="left:246px;top:81px;width:41px;text-align:center;">Curve</div>
<div style="left:289px;top:79px;width:82px;height:18px;background:rgba(36,36,36,0.55);border-radius:4px;"></div>
<div class="t" style="left:289px;top:81px;width:82px;text-align:center;">Control Points</div>
<div style="left:373px;top:79px;width:62px;height:18px;background:rgba(36,36,36,0.55);border-radius:4px;"></div>
<div class="t" style="left:373px;top:81px;width:62px;text-align:center;">Segments</div>
<div style="left:872px;top:79px;width:30px;height:18px;background:#2c2c2c;border-radius:4px;"></div>
<svg style="left:875px;top:80px;" width="16" height="16" viewBox="0 0 16 16"><path d="M2.200 4.200Q8 -2.600 13.800 4.200Q8 11 2.200 4.200Z" fill="#e6e6e6"/><circle cx="8" cy="4.200" r="2.600" fill="#2c2c2c"/><circle cx="8" cy="4.200" r="1.250" fill="#e6e6e6"/>
<path d="M-1.200 7.200l8.400 3.400l-3.700 1.400L2 15.800Z" fill="#e6e6e6" stroke="#2c2c2c" stroke-width="0.700"/></svg>
<svg style="left:891px;top:86px;" width="9" height="6" viewBox="0 0 9 6"><path d="M1 1 L4.5 4.5 L8 1" fill="none" stroke="#e6e6e6" stroke-width="1.3"/></svg>
<div style="left:909px;top:79px;width:38px;height:18px;background:#2c2c2c;border-radius:4px;"></div>
<div style="left:909px;top:79px;width:18px;height:18px;background:#5680c2;border-radius:4px 0 0 4px;"></div>
<svg style="left:910px;top:80px;" width="16" height="16" viewBox="0 0 16 16"><path d="M1.5 4.5C8 4.5 11.5 8 11.5 14.5" fill="none" stroke="#fff" stroke-width="1.2"/><path d="M4 12L13 3M9 2.5h4.5V7" fill="none" stroke="#fff" stroke-width="1.2"/><circle cx="3.3" cy="12.7" r="1.7" fill="#5680c2" stroke="#fff" stroke-width="1.1"/></svg>
<svg style="left:933px;top:86px;" width="9" height="6" viewBox="0 0 9 6"><path d="M1 1 L4.5 4.5 L8 1" fill="none" stroke="#e6e6e6" stroke-width="1.3"/></svg>
<div style="left:954px;top:79px;width:38px;height:18px;background:#2c2c2c;border-radius:4px;"></div>
<div style="left:954px;top:79px;width:18px;height:18px;background:#5680c2;border-radius:4px 0 0 4px;"></div>
<svg style="left:955px;top:80px;" width="16" height="16" viewBox="0 0 16 16"><circle cx="10" cy="6.5" r="4.8" fill="#fff"/><circle cx="6.5" cy="9.5" r="4.6" fill="none" stroke="#fff" stroke-width="1.2"/><path d="M6.5 4.9a4.6 4.6 0 0 1 4.6 4.6" fill="none" stroke="#5680c2" stroke-width="1.1"/></svg>
<svg style="left:978px;top:86px;" width="9" height="6" viewBox="0 0 9 6"><path d="M1 1 L4.5 4.5 L8 1" fill="none" stroke="#e6e6e6" stroke-width="1.3"/></svg>
<div style="left:999px;top:79px;width:18px;height:18px;background:#585858;border-radius:4px;"></div>
<svg style="left:1000px;top:80px;" width="16" height="16" viewBox="0 0 16 16"><rect x="1.5" y="4.5" width="10" height="10" rx="1" fill="none" stroke="#e6e6e6" stroke-width="1.1"/><path d="M4.5 4V2.5a1 1 0 0 1 1-1h8a1 1 0 0 1 1 1v8a1 1 0 0 1-1 1H12" fill="none" stroke="#e6e6e6" stroke-width="1.1"/><path d="M5 8h1.2M8 11h1.2" stroke="#e6e6e6" stroke-width="1.2"/></svg>
<div style="left:1024px;top:79px;width:95px;height:18px;background:#2c2c2c;border-radius:4px;"></div>
<div style="left:1024px;top:79px;width:75px;height:18px;background:#585858;border-radius:4px 0 0 4px;"></div>
<div style="left:1043px;top:79px;width:18px;height:18px;background:#5680c2;"></div>
<div style="left:1061.5px;top:79px;width:1px;height:18px;background:#3e3e3e;"></div>
<div style="left:1080px;top:79px;width:1px;height:18px;background:#3e3e3e;"></div>
<svg style="left:1024px;top:79px;" width="95" height="18" viewBox="0 0 95 18"><circle cx="9.5" cy="9" r="5.8" fill="none" stroke="#e6e6e6" stroke-width="1"/><ellipse cx="9.5" cy="9" rx="2.6" ry="5.8" fill="none" stroke="#e6e6e6" stroke-width="0.9"/><path d="M3.7 9h11.6" stroke="#e6e6e6" stroke-width="0.9"/><circle cx="28" cy="9" r="6.3" fill="#fff"/><circle cx="47" cy="9" r="5.8" fill="none" stroke="#e6e6e6" stroke-width="1"/><path d="M47 3.2A5.8 5.8 0 1 0 52.8 9H47Z" fill="#e6e6e6"/><path d="M48.5 10.5l3.2 3.2M50.5 10l2 2M48 12.5l1.6 1.6" stroke="#e6e6e6" stroke-width="0.7"/><circle cx="66" cy="9" r="5.8" fill="none" stroke="#e6e6e6" stroke-width="1"/><path d="M62.5 9.5a3.8 3.8 0 0 1 3.3-4" fill="none" stroke="#e6e6e6" stroke-width="1"/><path d="M67.5 14.2l3-3M69 14l2-2" stroke="#e6e6e6" stroke-width="0.6"/></svg>
<svg style="left:1105px;top:86px;" width="9" height="6" viewBox="0 0 9 6"><path d="M1 1 L4.5 4.5 L8 1" fill="none" stroke="#e6e6e6" stroke-width="1.3"/></svg>
<div class="ts" style="left:67px;top:110px;color:#fff;">Right Orthographic</div>
<div class="ts" style="left:67px;top:128px;color:#fff;">(1) BezierCurve</div>
<div class="ts" style="left:67px;top:146px;color:#fff;">10 Centimeters</div>
<div style="left:9px;top:110.3px;width:40px;height:68px;background:#2f2f2f;border-radius:4px;"></div>
<div style="left:9px;top:143.8px;width:40px;height:1px;background:rgba(30,30,30,0.4);"></div>
<div style="left:9px;top:110.3px;width:40px;height:33px;background:#5680c2;border-radius:4px 4px 0 0;"></div>
<svg style="left:17px;top:116.3px;" width="22" height="22" viewBox="0 0 22 22"><path d="M0 0.65H22M21.35 0V22M22 21.35H0M0.65 22V0" fill="none" stroke="#ffa928" stroke-width="1.3" stroke-dasharray="3.95 2.1 4.05 2.1 4.05 2.1 3.95"/>
<path d="M7.92 5.94 L15.84 12.32 L11.440000000000001 13.2 L8.36 17.16Z" fill="#e6e6e6"/></svg>
<svg style="left:15px;top:147.60000000000002px;" width="26" height="26" viewBox="0 0 26 26"><circle cx="13" cy="13" r="11" fill="none" stroke="#fff" stroke-width="1.4"/><circle cx="13" cy="13" r="11" fill="none" stroke="#c03030" stroke-width="1.4" stroke-dasharray="4.3 4.34"/>
<path d="M13 5.5v5M13 15.5v5M5.5 13h5M15.5 13h5" stroke="#8a8a8a" stroke-width="1.4"/></svg>
<div style="left:9px;top:185px;width:40px;height:138.0px;background:#2f2f2f;border-radius:4px;"></div>
<div style="left:9px;top:219.0px;width:40px;height:1px;background:rgba(30,30,30,0.4);"></div>
<div style="left:9px;top:253.5px;width:40px;height:1px;background:rgba(30,30,30,0.4);"></div>
<div style="left:9px;top:288.0px;width:40px;height:1px;background:rgba(30,30,30,0.4);"></div>
<svg style="left:16px;top:190.25px;" width="24" height="24" viewBox="0 0 24 24"><path d="M12 1l3 4.5h-6zM12 23l3-4.5h-6zM1 12l4.5-3v6zM23 12l-4.5-3v6z" fill="#e6e6e6"/><path d="M12 6.5v3M12 14.5v3M6.5 12h3M14.5 12h3" stroke="#e6e6e6" stroke-width="1.6"/></svg>
<svg style="left:16px;top:224.05px;" width="24" height="24" viewBox="0 0 24 24"><path d="M4.2 9A8.6 8.6 0 0 1 19.8 9M19.8 15A8.6 8.6 0 0 1 4.2 15" fill="none" stroke="#e6e6e6" stroke-width="1.2"/><path d="M1 10.5h5.5l-2.7 4zM23 13.5h-5.5l2.7-4z" fill="#e6e6e6"/><path d="M12 8.5l3.5 3.5l-3.5 3.5l-3.5-3.5z" fill="#c4c4c4"/></svg>
<svg style="left:16px;top:259.25px;" width="24" height="24" viewBox="0 0 24 24"><rect x="3.200" y="11.800" width="9" height="9" fill="#e6e6e6"/><path d="M3.700 9.500V3.700H20.300V20.300H14.500" fill="none" stroke="#c4c4c4" stroke-width="1.100"/><path d="M13.200 10.800L17.800 6.200" fill="none" stroke="#e6e6e6" stroke-width="1.300"/><path d="M14.800 5.500h4v4z" fill="#e6e6e6"/></svg>
<svg style="left:16px;top:293.75px;" width="24" height="24" viewBox="0 0 24 24"><rect x="7.800" y="7.800" width="8.400" height="8.400" fill="#e6e6e6"/><path d="M4.800 6.800A9.200 9.200 0 0 1 8.600 3.500M15.400 3.500A9.200 9.200 0 0 1 19.200 6.800M20.800 9.400A9.200 9.200 0 0 1 20.800 14.600M19.200 17.200A9.200 9.200 0 0 1 15.400 20.500M8.600 20.500A9.200 9.200 0 0 1 4.800 17.200M3.200 14.600A9.200 9.200 0 0 1 3.200 9.400" fill="none" stroke="#e6e6e6" stroke-width="1.100"/><path d="M12 1.200l3 4h-6zM12 22.800l3-4h-6zM1.200 12l4-3v6zM22.800 12l-4-3v6z" fill="#e6e6e6"/></svg>
<div style="left:9px;top:329.5px;width:40px;height:68px;background:#2f2f2f;border-radius:4px;"></div>
<div style="left:9px;top:363.0px;width:40px;height:1px;background:rgba(30,30,30,0.4);"></div>
<svg style="left:15px;top:334.5px;" width="26" height="24" viewBox="0 0 26 24"><path d="M1.100 18.400L2 14.800L14.400 2.200L18.200 6L5.600 18.400Z" fill="#e6e6e6"/><path d="M12.500 4.200L16.300 8" stroke="#2f2f2f" stroke-width="0.900"/><path d="M2.100 14.900L5.500 18.300" stroke="#2f2f2f" stroke-width="0.600"/><path d="M2.500 19.800C5 22 8.500 22.500 11.500 20S16 14.800 19 15S24 17.500 25.500 20.200" fill="none" stroke="#8fe0b4" stroke-width="1.200"/></svg>
<svg style="left:16px;top:367.5px;" width="24" height="26" viewBox="0 0 24 26"><path d="M8.500 22V12.500A9.500 9.500 0 0 1 18 22Z" fill="#8fe0b4"/><path d="M8.500 9.500A12.500 12.500 0 0 1 21 22" fill="none" stroke="#8fe0b4" stroke-width="1.100"/>
<path d="M3.400 2.200h5.100v23.100h-5.100z" fill="#e6e6e6"/><path d="M3.400 22h20.500v3.300H3.400z" fill="#e6e6e6"/><path d="M6.300 5h2.200M6.300 8h2.200M6.300 11h2.200M6.300 14h2.200M6.300 17h2.200M6.300 20h2.200M11 22v1.800M13.500 22v1.800M16 22v1.800M18.500 22v1.800M21 22v1.800" stroke="#2f2f2f" stroke-width="0.900"/></svg>
<div style="left:9px;top:404.8px;width:40px;height:68px;background:#2f2f2f;border-radius:4px;"></div>
<div style="left:9px;top:438.3px;width:40px;height:1px;background:rgba(30,30,30,0.4);"></div>
<svg style="left:15px;top:408.8px;" width="26" height="26" viewBox="0 0 26 26"><path d="M1.3 18.9L2 15.2L14.3 2.6L18.1 6.4L5.6 18.6Z" fill="#e6e6e6"/><path d="M12.3 4.6L16.1 8.4" stroke="#2f2f2f" stroke-width="0.9"/><path d="M2.2 15L5.8 18.6" stroke="#2f2f2f" stroke-width="0.6"/>
<path d="M2.500 20C5 22.600 8.500 22.800 11 20.300S15.500 15 18.800 15.200S24 18 25.500 20.500" fill="none" stroke="#8fe0b4" stroke-width="1.300"/>
<path d="M3 20.500V26M8 25L12.500 12.500M25.500 12V21" stroke="#e6e6e6" stroke-width="0.700" fill="none"/>
<g fill="#e6e6e6"><rect x="2" y="25" width="2" height="2"/><rect x="7" y="24" width="2" height="2"/><rect x="9.600" y="19" width="2.400" height="2.400"/><rect x="11.500" y="11.500" width="2" height="2"/><rect x="24.500" y="20" width="2" height="2"/><path d="M25.500 10.500l1.500 2.200h-3z"/></g></svg>
<svg style="left:15px;top:442.8px;" width="26" height="26" viewBox="0 0 26 26"><path d="M9 14.700C6 16 4.500 20 3.900 25.600" fill="none" stroke="#e6e6e6" stroke-width="1.500"/><path d="M11 13.800C15 12 19.500 8.500 21.800 4.200" fill="none" stroke="#8fe0b4" stroke-width="1.400"/><circle cx="21.800" cy="4.200" r="1.900" fill="#8fe0b4"/><circle cx="9" cy="14.700" r="1.400" fill="#e6e6e6"/><rect x="2.700" y="24.400" width="2.400" height="2.400" fill="#e6e6e6"/><path d="M10.800 3.400L9.800 7.800L6.400 4.400Z" fill="#8fe0b4"/><path d="M6.500 8L8.500 6" stroke="#8fe0b4" stroke-width="1.300"/></svg>
<div style="left:9px;top:479.7px;width:40px;height:68px;background:#2f2f2f;border-radius:4px;"></div>
<div style="left:9px;top:513.2px;width:40px;height:1px;background:rgba(30,30,30,0.4);"></div>
<svg style="left:15px;top:483.7px;" width="26" height="26" viewBox="0 0 26 26"><path d="M6 20C7.500 15.500 7.500 10.500 12 8S18 6.500 20 6C18.500 10.500 18.500 15.500 14 18S8 19.500 6 20Z" fill="#dcc6ea"/><path d="M2.800 23.200L23.400 3.200" stroke="#e6e6e6" stroke-width="1.100"/><circle cx="13" cy="13.200" r="1" fill="#f3eaf8"/><path d="M3.200 3.200l4.600 .800l-3.800 3.800zM23 22.800l-4.600-.800l3.800-3.800z" fill="#cfaee2"/><path d="M5.500 5.500l2.200 2.200M20.700 20.500l-2.200-2.200" stroke="#cfaee2" stroke-width="1.400"/></svg>
<svg style="left:15px;top:517.7px;" width="26" height="26" viewBox="0 0 26 26"><g stroke="#dcc6ea" stroke-width="0.900" stroke-dasharray="1 0.900"><path d="M1.500 19.500l5.500 5.500M3.500 17.500l5.500 5.500M5.500 15.500l5.500 5.500M7.500 13.500l5.500 5.500M15 6l5.500 5.500M17 4l5.500 5.500M19 2l5.500 5.500M13 8l5.500 5.500"/></g><path d="M1.500 25.200L25 1.600" stroke="#e6e6e6" stroke-width="1.300"/><circle cx="1.500" cy="25.200" r="1.700" fill="#e6e6e6"/><circle cx="25" cy="1.600" r="1.700" fill="#e6e6e6"/><path d="M5 8C7.500 6.500 10 6 13 6.500M19.800 13.500c1 2 .5 4.500-1.600 6.500" fill="none" stroke="#dcc6ea" stroke-width="1.400"/><path d="M3 8.600l4.200-2.400l.3 3.900z" fill="#dcc6ea"/></svg>
<div style="left:9px;top:554.3px;width:40px;height:68px;background:#2f2f2f;border-radius:4px;"></div>
<div style="left:9px;top:587.8px;width:40px;height:1px;background:rgba(30,30,30,0.4);"></div>
<svg style="left:14px;top:558.3px;" width="28" height="26" viewBox="0 0 28 26"><path d="M0.200 8.200L4.300 4.600H17.200L27.400 19L22.300 22.600H8.500Z" fill="#dcc6ea"/><path d="M0.200 8.200L13.800 8.800L22.300 22.600M13.800 8.800L17.200 4.600" fill="none" stroke="#3a3340" stroke-width="0.700"/><path d="M22.300 1.200l5-2.800l-1.400 2.800l1.400 2.800z" fill="#cfaee2"/></svg>
<svg style="left:15px;top:594.3px;" width="26" height="22" viewBox="0 0 26 22"><path d="M0.800 21.700L10.800 20L10 9.200L18.200 9.500L25.100 3.700" fill="none" stroke="#d8d0dc" stroke-width="0.900"/><g fill="#dcc6ea"><circle cx="0.800" cy="21.700" r="1.700"/><circle cx="10.800" cy="20" r="1.700"/><circle cx="10" cy="9.200" r="1.700"/><circle cx="18.200" cy="9.500" r="1.700"/><circle cx="25.100" cy="3.700" r="1.700"/></g></svg>
<svg style="left:43px;top:137.5px;" width="4" height="4" viewBox="0 0 4 4"><path d="M4 0V4H0Z" fill="#8a8a8a"/></svg>
<svg style="left:43px;top:282px;" width="4" height="4" viewBox="0 0 4 4"><path d="M4 0V4H0Z" fill="#8a8a8a"/></svg>
<svg style="left:43px;top:357px;" width="4" height="4" viewBox="0 0 4 4"><path d="M4 0V4H0Z" fill="#8a8a8a"/></svg>
<svg style="left:43px;top:466px;" width="4" height="4" viewBox="0 0 4 4"><path d="M4 0V4H0Z" fill="#8a8a8a"/></svg>
<svg style="left:0;top:0" width="1365" height="731"><path d="M1077 141V125" stroke="#2c8fff" stroke-width="2" fill="none"/><path d="M1087 150.800H1103" stroke="#8bdc00" stroke-width="2" fill="none"/><circle cx="1044.500" cy="150.800" r="5.800" fill="#62871d"/><circle cx="1077" cy="183.400" r="5.800" fill="#2f62a3"/><circle cx="1077" cy="118.400" r="7.200" fill="#2c8fff"/><circle cx="1109.500" cy="150.800" r="7.200" fill="#8bdc00"/><circle cx="1077" cy="150.800" r="7.200" fill="#ff3352"/><text x="1077" y="122.2" text-anchor="middle" font-size="10" font-family="DejaVu Sans,sans-serif" fill="#0b4a90" letter-spacing="0">Z</text><text x="1109.5" y="154.60000000000002" text-anchor="middle" font-size="10" font-family="DejaVu Sans,sans-serif" fill="#3f6f00" letter-spacing="0">Y</text><text x="1077" y="154.60000000000002" text-anchor="middle" font-size="10" font-family="DejaVu Sans,sans-serif" fill="#8c1228" letter-spacing="0">X</text></svg>
<div style="left:1090.3px;top:191.3px;width:28px;height:28px;background:rgba(40,40,40,0.75);border-radius:14px;"></div>
<svg style="left:1094.3px;top:195.3px;" width="20" height="20" viewBox="0 0 20 20"><circle cx="11" cy="9.300" r="6.600" fill="#e6e6e6"/><path d="M6.600 13.900L2.400 18" stroke="#e6e6e6" stroke-width="2.200" stroke-linecap="round"/><path d="M7.800 9.300h6.400M11 6.100v6.400" stroke="#303030" stroke-width="1.300"/></svg>
<div style="left:1090.3px;top:222.0px;width:28px;height:28px;background:rgba(40,40,40,0.75);border-radius:14px;"></div>
<svg style="left:1094.3px;top:226.0px;" width="20" height="20" viewBox="0 0 20 20"><g stroke="#e6e6e6" stroke-width="2.500" stroke-linecap="round" fill="none"><path d="M15.400 11L16.600 6.800"/><path d="M12.800 10L13.500 4"/><path d="M10 10V3.200"/><path d="M7.200 10.500L6.400 4.600"/><path d="M6.300 14.800L2.800 11.500"/></g><path d="M5.700 9.500H16.700C16.700 14.500 14.800 18.600 11 18.600C8 18.600 6.200 16.500 5 13.500Z" fill="#e6e6e6"/></svg>
<div style="left:1090.3px;top:252.7px;width:28px;height:28px;background:rgba(40,40,40,0.75);border-radius:14px;"></div>
<svg style="left:1094.3px;top:256.7px;" width="20" height="20" viewBox="0 0 20 20"><circle cx="5.400" cy="7" r="3" fill="#e6e6e6"/><circle cx="12.200" cy="5.800" r="4" fill="#e6e6e6"/><rect x="4.800" y="11" width="8.800" height="6.600" rx="0.800" fill="#e6e6e6"/><path d="M14.200 14.300l4.300-2.800v5.600z" fill="#e6e6e6"/><path d="M4.300 13.500l-1.800 .900l1.800 .900z" fill="#e6e6e6"/><circle cx="12.200" cy="5.800" r="1.100" fill="#303030"/><circle cx="5.400" cy="7" r="0.900" fill="#303030"/></svg>
<div style="left:1090.3px;top:283.4px;width:28px;height:28px;background:rgba(40,40,40,0.75);border-radius:14px;"></div>
<svg style="left:1096.3px;top:289.7px;" width="16" height="15.4" viewBox="0 0 16 15.4"><path d="M0.700 0.700h14.600v14H0.700zM0.700 5.400h14.600M0.700 10h14.600M5.600 0.700v14M10.400 0.700v14" fill="none" stroke="#e6e6e6" stroke-width="1.300"/></svg>
<div style="left:1119px;top:115.5px;width:9px;height:14.5px;background:rgba(48,48,48,0.8);border-radius:4px 0 0 4px;"></div>
<svg style="left:1120px;top:118px;" width="5" height="8" viewBox="0 0 5 8"><path d="M4.5 0.5L1 4L4.5 7.5" fill="none" stroke="#aaa" stroke-width="1.1"/></svg>
<div style="left:1130px;top:50px;width:241px;height:210px;background:#282828;border-radius:5px;overflow:hidden;">
<div style="left:0px;top:0px;width:241px;height:25px;background:#3a3a3a;"></div>
<div style="left:0px;top:46px;width:241px;height:20px;background:#2b2b2b;"></div>
<div style="left:0px;top:86px;width:241px;height:20px;background:#2b2b2b;"></div>
<div style="left:0px;top:126px;width:241px;height:20px;background:#2b2b2b;"></div>
<div style="left:0px;top:166px;width:241px;height:20px;background:#2b2b2b;"></div>
<div style="left:0px;top:206px;width:241px;height:20px;background:#2b2b2b;"></div>
<div style="left:0px;top:66px;width:241px;height:20px;background:#3b5689;"></div>
</div>
<div style="left:1139px;top:52.7px;width:30px;height:18.6px;background:#2d2d2d;border-radius:4px;box-shadow:0 0 0 1px rgba(255,255,255,0.075);"></div>
<svg style="left:1142px;top:54px;" width="16" height="16" viewBox="0 0 16 16"><rect x="1" y="1" width="5" height="3" fill="#e6e6e6"/><rect x="7" y="6.500" width="7" height="3" fill="#e6e6e6"/><rect x="7" y="11.500" width="7" height="3" fill="#e6e6e6"/><path d="M3 4v9h4M3 8h4" fill="none" stroke="#e6e6e6" stroke-width="1"/></svg>
<svg style="left:1158px;top:60px;" width="9" height="6" viewBox="0 0 9 6"><path d="M1 1 L4.5 4.5 L8 1" fill="none" stroke="#e6e6e6" stroke-width="1.3"/></svg>
<div style="left:1176px;top:52.7px;width:30px;height:18.6px;background:#2d2d2d;border-radius:4px;box-shadow:0 0 0 1px rgba(255,255,255,0.075);"></div>
<svg style="left:1179px;top:54px;" width="16" height="16" viewBox="0 0 16 16">
<path d="M1.500 5.500v9.300h9.300M3.500 3.500v9.300h9.300" fill="none" stroke="#e6e6e6" stroke-width="1"/>
<rect x="5.800" y="1.700" width="8.700" height="8.700" fill="#2d2d2d" stroke="#e6e6e6" stroke-width="1.100"/>
<path d="M6.400 10L9.200 4.600L11 8L12 7L13.900 10Z" fill="#e6e6e6"/><circle cx="12.600" cy="3.900" r="0.900" fill="#e6e6e6"/></svg>
<svg style="left:1195px;top:60px;" width="9" height="6" viewBox="0 0 9 6"><path d="M1 1 L4.5 4.5 L8 1" fill="none" stroke="#e6e6e6" stroke-width="1.3"/></svg>
<div style="left:1224px;top:53px;width:109px;height:18px;background:#1d1d1d;border-radius:4px;"></div>
<svg style="left:1228px;top:54px;" width="16" height="16" viewBox="0 0 16 16"><circle cx="10" cy="6" r="4.200" fill="none" stroke="#e6e6e6" stroke-width="1.200"/><path d="M7 9L1.500 14.500" stroke="#e6e6e6" stroke-width="1.300"/></svg>
<div style="left:1351px;top:52.7px;width:20px;height:18.6px;background:#2d2d2d;border-radius:4px;box-shadow:0 0 0 1px rgba(255,255,255,0.075);"></div>
<svg style="left:1353px;top:54px;" width="16" height="16" viewBox="0 0 16 16"><path d="M1 2.500h13l-5 6v6l-3-1.500v-4.500z" fill="none" stroke="#e6e6e6" stroke-width="1.100"/></svg>
<svg style="left:1170px;top:100px;" width="40" height="80" viewBox="0 0 40 80"><path d="M10.500 12v54.500M10.500 26.500h12M10.500 46.500h12M10.500 66.500h12" fill="none" stroke="#6e6e6e" stroke-width="1"/><path d="M8.300 23l5.600 3.500l-5.600 3.500zM8.300 43l5.600 3.500l-5.600 3.500zM8.300 63l5.600 3.500l-5.600 3.500z" fill="#c4c4c4"/></svg>
<svg style="left:1152px;top:78px;" width="16" height="16" viewBox="0 0 16 16"><rect x="1.500" y="2.500" width="13" height="3" fill="none" stroke="#e6e6e6" stroke-width="1"/><path d="M2.500 5.500v8h11v-8" fill="none" stroke="#e6e6e6" stroke-width="1"/><rect x="6" y="8" width="4" height="1.600" fill="#e6e6e6"/></svg>
<div class="t" style="left:1174px;top:80px;">Scene Collection</div>
<svg style="left:1155px;top:102px;" width="8" height="8" viewBox="0 0 8 8"><path d="M0.500 1h7L4 7.500z" fill="#c8c8c8"/></svg>
<div style="left:1175px;top:101px;width:11px;height:11px;background:#e6e6e6;border-radius:2px;"></div>
<svg style="left:1176px;top:102px;" width="9" height="9" viewBox="0 0 9 9"><path d="M1.500 4.500l2.500 2.500l4-5.500" fill="none" stroke="#1d1d1d" stroke-width="1.600"/></svg>
<div style="left:1190px;top:97px;width:20px;height:19px;background:#303030;border:1px solid #5a5a5a;border-radius:4px;"></div>
<svg style="left:1192px;top:98px;" width="16" height="16" viewBox="0 0 16 16"><rect x="1.500" y="2.500" width="13" height="3" fill="none" stroke="#e6e6e6" stroke-width="1"/><path d="M2.500 5.500v8h11v-8" fill="none" stroke="#e6e6e6" stroke-width="1"/><rect x="6" y="8" width="4" height="1.600" fill="#e6e6e6"/></svg>
<div class="t" style="left:1214px;top:100px;">Collection</div>
<svg style="left:1342px;top:101px;" width="14" height="10" viewBox="0 0 14 10">
<path d="M0.3 5 Q7 -3.2 13.7 5 Q7 13.2 0.3 5Z" fill="#e6e6e6"/>
<circle cx="7" cy="5" r="3.1" fill="#282828"/><circle cx="7" cy="5" r="1.5" fill="#e6e6e6"/></svg>
<div style="left:1190px;top:117px;width:20px;height:19px;background:#55688f;border:1px solid #7a8bb0;border-radius:4px;"></div>
<svg style="left:1192px;top:118px;" width="16" height="16" viewBox="0 0 16 16"><path d="M3 3.500h4.500a4.800 4.800 0 0 1 0 9.600H3" fill="none" stroke="#e39a5c" stroke-width="3" stroke-linecap="round"/></svg>
<div class="t" style="left:1214px;top:120px;color:#f5a93b;">BezierCurve</div>
<svg style="left:1296px;top:118px;" width="16" height="16" viewBox="0 0 16 16"><path d="M1.800 12.200l6-6a3.600 3.600 0 0 1 4.600-4.400l-2.400 2.400l.5 2l2 .5l2.400-2.400a3.600 3.600 0 0 1-4.400 4.600l-6 6a1.900 1.900 0 0 1-2.700-2.700z" fill="none" stroke="#6a9ce6" stroke-width="1.1" stroke-linejoin="round"/></svg>
<div style="left:1314px;top:117px;width:20px;height:19px;background:#3f6a7f;border:1px solid #5d8a99;border-radius:4px;"></div>
<svg style="left:1316px;top:118px;" width="16" height="16" viewBox="0 0 16 16"><path d="M6 3.500h2.500a4.500 4.500 0 0 1 0 9H4.500" fill="none" stroke="#22d4a8" stroke-width="1.100"/><rect x="3.500" y="2" width="3" height="3" fill="none" stroke="#22d4a8" stroke-width="1"/><rect x="1.500" y="11" width="3" height="3" fill="none" stroke="#22d4a8" stroke-width="1"/></svg>
<svg style="left:1342px;top:121px;" width="14" height="10" viewBox="0 0 14 10">
<path d="M0.3 5 Q7 -3.2 13.7 5 Q7 13.2 0.3 5Z" fill="#e6e6e6"/>
<circle cx="7" cy="5" r="3.1" fill="#282828"/><circle cx="7" cy="5" r="1.5" fill="#e6e6e6"/></svg>
<svg style="left:1192px;top:138px;" width="16" height="16" viewBox="0 0 16 16"><circle cx="4" cy="4.500" r="2.800" fill="#e39a5c"/><circle cx="10" cy="3.800" r="3.400" fill="#e39a5c"/><rect x="2" y="7.500" width="10" height="6" rx="1" fill="#e39a5c"/><path d="M12.500 10.500l3.200-2v5z" fill="#e39a5c"/><circle cx="10" cy="3.800" r="1" fill="#282828"/><circle cx="4" cy="4.500" r="0.900" fill="#282828"/></svg>
<div class="t" style="left:1214px;top:140px;">Camera</div>
<div style="left:1273px;top:137px;width:20px;height:19px;background:#4a4a4a;border:1px solid #686868;border-radius:4px;"></div>
<svg style="left:1275px;top:138px;" width="16" height="16" viewBox="0 0 16 16"><circle cx="4.300" cy="5" r="2.300" fill="none" stroke="#12c89a" stroke-width="1"/><circle cx="10" cy="4.200" r="3" fill="none" stroke="#12c89a" stroke-width="1"/><circle cx="10" cy="4.200" r="0.800" fill="#12c89a"/><rect x="2.500" y="8.500" width="8.500" height="5" fill="none" stroke="#12c89a" stroke-width="1"/><path d="M12 11l3-1.800v3.600z" fill="none" stroke="#12c89a" stroke-width="0.900"/><path d="M2.500 11h-1.500" stroke="#12c89a" stroke-width="1"/></svg>
<svg style="left:1342px;top:141px;" width="14" height="10" viewBox="0 0 14 10">
<path d="M0.3 5 Q7 -3.2 13.7 5 Q7 13.2 0.3 5Z" fill="#e6e6e6"/>
<circle cx="7" cy="5" r="3.1" fill="#282828"/><circle cx="7" cy="5" r="1.5" fill="#e6e6e6"/></svg>
<svg style="left:1192px;top:158px;" width="16" height="16" viewBox="0 0 16 16"><circle cx="8" cy="6" r="5.200" fill="#e39a5c"/><path d="M5.500 10h5v2h-5z" fill="#e39a5c"/><path d="M5.800 13h4.400M6.500 14.800h3" stroke="#e39a5c" stroke-width="1.100"/><path d="M5.500 5.500h1.500v2.500M10.500 5.500h-1.500v2.500M6.500 6.500h3" stroke="#282828" stroke-width="0.900" fill="none"/></svg>
<div class="t" style="left:1214px;top:160px;">Light</div>
<svg style="left:1260px;top:158px;" width="16" height="16" viewBox="0 0 16 16"><circle cx="8" cy="7" r="5.700" fill="none" stroke="#12c89a" stroke-width="1.100"/><circle cx="8" cy="7" r="1" fill="#12c89a"/><path d="M8 8.500v7.500" stroke="#12c89a" stroke-width="1" stroke-dasharray="2.500 1.200"/></svg>
<svg style="left:1342px;top:161px;" width="14" height="10" viewBox="0 0 14 10">
<path d="M0.3 5 Q7 -3.2 13.7 5 Q7 13.2 0.3 5Z" fill="#e6e6e6"/>
<circle cx="7" cy="5" r="3.1" fill="#282828"/><circle cx="7" cy="5" r="1.5" fill="#e6e6e6"/></svg>
<div style="left:1130px;top:263px;width:241px;height:443.500px;background:#424242;border-radius:5px 0 0 5px;overflow:hidden;">
<div style="left:0px;top:0px;width:241px;height:25px;background:#3a3a3a;"></div>
<div style="left:0px;top:25px;width:28px;height:420px;background:#232323;"></div>
<div style="left:2.5px;top:34px;width:25.5px;height:26px;background:#2b2b2b;border-radius:4px 0 0 4px;"></div>
<div style="left:2.5px;top:69.6px;width:25.5px;height:26.2px;background:#2b2b2b;border-radius:4px 0 0 4px;"></div>
<div style="left:2.5px;top:97.55px;width:25.5px;height:26.2px;background:#2b2b2b;border-radius:4px 0 0 4px;"></div>
<div style="left:2.5px;top:125.5px;width:25.5px;height:26.2px;background:#2b2b2b;border-radius:4px 0 0 4px;"></div>
<div style="left:2.5px;top:153.45px;width:25.5px;height:26.2px;background:#2b2b2b;border-radius:4px 0 0 4px;"></div>
<div style="left:2.5px;top:181.39999999999998px;width:25.5px;height:26.2px;background:#2b2b2b;border-radius:4px 0 0 4px;"></div>
<div style="left:2.5px;top:217.6px;width:25.5px;height:26px;background:#2b2b2b;border-radius:4px 0 0 4px;"></div>
<div style="left:2.5px;top:245.65px;width:25.5px;height:26px;background:#424242;border-radius:4px 0 0 4px;"></div>
<div style="left:2.5px;top:273.7px;width:25.5px;height:26px;background:#2b2b2b;border-radius:4px 0 0 4px;"></div>
<div style="left:2.5px;top:301.75px;width:25.5px;height:26px;background:#2b2b2b;border-radius:4px 0 0 4px;"></div>
<div style="left:2.5px;top:329.8px;width:25.5px;height:26px;background:#2b2b2b;border-radius:4px 0 0 4px;"></div>
<div style="left:2.5px;top:357.85px;width:25.5px;height:26px;background:#2b2b2b;border-radius:4px 0 0 4px;"></div>
<div style="left:33px;top:65px;width:198px;height:334px;background:#383838;border-radius:4px;"></div>
<div style="left:33px;top:89px;width:198px;height:1px;background:#2f2f2f;"></div>
</div>
<div style="left:1139px;top:265.7px;width:30px;height:18.6px;background:#2d2d2d;border-radius:4px;box-shadow:0 0 0 1px rgba(255,255,255,0.075);"></div>
<svg style="left:1142px;top:267px;" width="16" height="16" viewBox="0 0 16 16"><rect x="1.500" y="2" width="12" height="5" rx="2.500" fill="none" stroke="#e6e6e6" stroke-width="1"/><rect x="1.500" y="9" width="12" height="5" rx="2.500" fill="none" stroke="#e6e6e6" stroke-width="1"/><path d="M4 2h4v5H4a2.500 2.500 0 0 1 0-5zM4 9h6.500v5H4a2.500 2.500 0 0 1 0-5z" fill="#e6e6e6"/></svg>
<svg style="left:1158px;top:273px;" width="9" height="6" viewBox="0 0 9 6"><path d="M1 1 L4.5 4.5 L8 1" fill="none" stroke="#e6e6e6" stroke-width="1.3"/></svg>
<svg style="left:1183px;top:267px;" width="16" height="16" viewBox="0 0 16 16"><rect x="4.500" y="4.500" width="7" height="7" fill="#e6e6e6"/><path d="M1.500 4.500v-3h3M11.500 1.500h3v3M14.500 11.500v3h-3M4.500 14.500h-3v-3" fill="none" stroke="#e6e6e6" stroke-width="1.100"/></svg>
<div class="t" style="left:1206px;top:268px;">BezierCurve</div>
<svg style="left:1340px;top:266px;" width="16" height="18" viewBox="0 0 16 18"><g transform="rotate(40 8 8)"><path d="M5.500 1.500h5v1.500l-1 1v3.500l2 2v1h-7v-1l2-2V4l-1-1zM8 10.500v6" fill="none" stroke="#9a9a9a" stroke-width="1.100"/></g></svg>
<svg style="left:1136.2px;top:301.2px;" width="17.6" height="17.6" viewBox="0 0 16 16"><path d="M3.500 1.500v7" stroke="#c8c8c8" stroke-width="1.200"/><rect x="2" y="8.500" width="3" height="5.500" rx="1.200" fill="#c8c8c8"/><path d="M11.500 14.500V8a3 3 0 0 1-1.500-5.500v3h3v-3A3 3 0 0 1 11.500 8" fill="none" stroke="#c8c8c8" stroke-width="1.700"/></svg>
<svg style="left:1136.2px;top:336.2px;" width="17.6" height="17.6" viewBox="0 0 16 16"><path d="M1.500 5.500h13v9h-13z" fill="none" stroke="#c8c8c8" stroke-width="1.200"/><path d="M5 5V2.500h6V5" fill="none" stroke="#c8c8c8" stroke-width="1.200"/><path d="M3.500 8h6M3.500 10h6M3.500 12h6M12 8v1M12 11v1" stroke="#c8c8c8" stroke-width="1.100"/></svg>
<svg style="left:1136.2px;top:364.7px;" width="17.6" height="17.6" viewBox="0 0 16 16"><rect x="1" y="2" width="14" height="5" rx="1" fill="#c8c8c8"/><rect x="3.500" y="7" width="9" height="8" fill="#c8c8c8"/><path d="M5 13.500l2.500-4l2 2.500l1-1l1 2.500z" fill="#232323"/></svg>
<svg style="left:1136.2px;top:392.7px;" width="17.6" height="17.6" viewBox="0 0 16 16"><path d="M1.500 5.500v9.300h9.300M3.500 3.500v9.300h9.300" fill="none" stroke="#c8c8c8" stroke-width="1"/><rect x="5.800" y="1.700" width="8.700" height="8.700" fill="#2b2b2b" stroke="#c8c8c8" stroke-width="1.100"/><path d="M6.400 10L9.200 4.600L11 8L12 7L13.900 10Z" fill="#c8c8c8"/><circle cx="12.600" cy="3.900" r="0.900" fill="#c8c8c8"/></svg>
<svg style="left:1136.2px;top:420.7px;" width="17.6" height="17.6" viewBox="0 0 16 16"><path d="M4.500 2L7.500 9.500Q4.500 11.500 1.500 9.500z" fill="#c8c8c8"/><circle cx="10" cy="11" r="3.200" fill="none" stroke="#c8c8c8" stroke-width="1.300"/><circle cx="12" cy="4" r="1.800" fill="#c8c8c8"/></svg>
<svg style="left:1136.2px;top:448.7px;" width="17.6" height="17.6" viewBox="0 0 16 16"><circle cx="8" cy="8" r="6.300" fill="none" stroke="#db6b78" stroke-width="1.300"/><path d="M4 4.500c2 0 3 1 3 2.500s-2 1-2 2.500 1.500 1 1.500 3M9.500 2c0 2 2 1.500 2.500 3s-1.500 2-.5 3.500 2.500.5 2.500.5" fill="#db6b78" stroke="#db6b78" stroke-width="0.800"/><path d="M1 13L15 3" stroke="#db6b78" stroke-width="0" /></svg>
<div style="left:0;top:0;width:0;height:0;transform-origin:1145px 494px;transform:scale(1.08);"><svg style="left:1137px;top:486px;" width="16" height="16" viewBox="0 0 16 16"><rect x="4.500" y="4.500" width="7" height="7" fill="#e39a5c"/><path d="M1.500 4.500v-3h3M11.500 1.500h3v3M14.500 11.500v3h-3M4.500 14.500h-3v-3" fill="none" stroke="#e39a5c" stroke-width="1.100"/></svg></div>
<div style="left:0;top:0;width:0;height:0;transform-origin:1145px 522px;transform:scale(1.08);"><svg style="left:1137px;top:514px;" width="16" height="16" viewBox="0 0 16 16"><path d="M1.800 12.200l6-6a3.600 3.600 0 0 1 4.600-4.400l-2.400 2.400l.5 2l2 .5l2.400-2.400a3.600 3.600 0 0 1-4.400 4.600l-6 6a1.900 1.900 0 0 1-2.700-2.700z" fill="#7fb3ff" stroke="#7fb3ff" stroke-width="0.6" stroke-linejoin="round"/></svg></div>
<div style="left:0;top:0;width:0;height:0;transform-origin:1145px 550px;transform:scale(1.08);"><svg style="left:1137px;top:542px;" width="16" height="16" viewBox="0 0 16 16"><circle cx="7.500" cy="8.500" r="2.800" fill="#6a9ce6"/><path d="M12.800 11.500A6.300 6.300 0 1 1 10.500 3" fill="none" stroke="#6a9ce6" stroke-width="1.100"/><circle cx="13" cy="3.500" r="1.600" fill="#6a9ce6"/></svg></div>
<div style="left:0;top:0;width:0;height:0;transform-origin:1145px 578px;transform:scale(1.08);"><svg style="left:1137px;top:570px;" width="16" height="16" viewBox="0 0 16 16"><g transform="rotate(-38 8 8)"><path d="M3 8a4.800 4.800 0 0 1 4.800-4.800c2.500 0 5 3 7.500 4.800c-2.500 1.800-5 4.800-7.500 4.800A4.800 4.800 0 0 1 3 8z" fill="none" stroke="#6a9ce6" stroke-width="1.100"/><circle cx="7.500" cy="8" r="2.600" fill="none" stroke="#6a9ce6" stroke-width="1.100"/><circle cx="7.500" cy="8" r="1" fill="#6a9ce6"/></g></svg></div>
<div style="left:0;top:0;width:0;height:0;transform-origin:1145px 606px;transform:scale(1.08);"><svg style="left:1137px;top:598px;" width="16" height="16" viewBox="0 0 16 16"><path d="M6 3.500h2.500a4.500 4.500 0 0 1 0 9H4.500" fill="none" stroke="#12c89a" stroke-width="1.100"/><rect x="3.500" y="2" width="3" height="3" fill="none" stroke="#12c89a" stroke-width="1"/><rect x="1.500" y="11" width="3" height="3" fill="none" stroke="#12c89a" stroke-width="1"/></svg></div>
<div style="left:0;top:0;width:0;height:0;transform-origin:1145px 634px;transform:scale(1.08);"><svg style="left:1137px;top:626px;" width="16" height="16" viewBox="0 0 16 16"><circle cx="8" cy="8" r="6.500" fill="#db6b78"/><path d="M8 8V1.500A6.500 6.500 0 0 1 14.500 8zM8 8v6.500A6.500 6.500 0 0 1 1.500 8z" fill="#2b2b2b" opacity="0.850"/><circle cx="8" cy="8" r="6.500" fill="none" stroke="#db6b78" stroke-width="1"/></svg></div>
<div style="left:1167px;top:297px;width:190px;height:18px;background:#2c2c2c;border-radius:4px;"></div>
<div class="t" style="left:1173px;top:299px;">Add Modifier</div>
<svg style="left:1346px;top:304px;" width="9" height="6" viewBox="0 0 9 6"><path d="M1 1 L4.5 4.5 L8 1" fill="none" stroke="#e6e6e6" stroke-width="1.3"/></svg>
<svg style="left:1171px;top:336px;" width="8" height="8" viewBox="0 0 8 8"><path d="M0.500 1h7L4 7.500z" fill="#b0b0b0"/></svg>
<svg style="left:1184px;top:332px;" width="16" height="16" viewBox="0 0 16 16"><path d="M14 4.500c0 1.500-2.800 2.500-6 2.500S2 6 2 4.500S4.800 2 8 2S14 3 14 4.500" fill="none" stroke="#e6e6e6" stroke-width="1"/><path d="M2 4.500c0 3 12 1.500 12 5c0 1.500-2.800 2.500-6 2.500S2 11 2 9.500M14 9.500c0 2-1 4-4 4.500M14 1.500v3.500" fill="none" stroke="#e6e6e6" stroke-width="1"/><circle cx="14.500" cy="14.500" r="0.700" fill="#e6e6e6"/></svg>
<div style="left:1210px;top:330.3px;width:104.5px;height:19px;background:#2c2c2c;border-radius:4.500px;border:1px solid #454545;"></div>
<div style="left:1211px;top:331.3px;width:33px;height:17px;background:#1d1d1d;border-radius:3.500px 0 0 3.500px;"></div>
<div class="t" style="left:1217px;top:333px;">Scre</div>
<div style="left:1244px;top:331.3px;width:17px;height:17px;background:#5680c2;"></div>
<div style="left:1261.8px;top:331.3px;width:16.5px;height:17px;background:#5680c2;"></div>
<div style="left:1279px;top:331.3px;width:17px;height:17px;background:#5680c2;"></div>
<svg style="left:1245px;top:332px;" width="16" height="16" viewBox="0 0 16 16"><rect x="2.500" y="4.500" width="9" height="9" fill="none" stroke="#fff" stroke-width="1"/><rect x="1" y="3" width="3" height="3" fill="#5680c2" stroke="#fff" stroke-width="0.900"/><rect x="1" y="12" width="3" height="3" fill="#5680c2" stroke="#fff" stroke-width="0.900"/><rect x="10" y="12" width="3" height="3" fill="#5680c2" stroke="#fff" stroke-width="0.900"/><rect x="9.500" y="1.500" width="4.500" height="4.500" fill="#fff"/></svg>
<svg style="left:1262px;top:332px;" width="16" height="16" viewBox="0 0 16 16"><rect x="1.600" y="2.800" width="12.800" height="8.400" rx="1" fill="none" stroke="#fff" stroke-width="1.700"/><path d="M8 11.500v2M4.800 14h6.400" stroke="#fff" stroke-width="1.300"/></svg>
<svg style="left:1279px;top:332px;" width="16" height="16" viewBox="0 0 16 16"><path d="M1.200 4.600h3.200l1.200-1.800h4.800l1.200 1.800h3.200v9.600h-13.600z" fill="#fff"/><circle cx="8" cy="9" r="3.500" fill="#5680c2"/><circle cx="8" cy="9" r="2" fill="none" stroke="#fff" stroke-width="1.200"/></svg>
<svg style="left:1299px;top:337px;" width="12" height="7" viewBox="0 0 12 7"><path d="M1 1l5 5l5-5" fill="none" stroke="#e6e6e6" stroke-width="1.200"/></svg>
<svg style="left:1318px;top:336px;" width="10" height="10" viewBox="0 0 10 10"><path d="M1 1l8 8M9 1l-8 8" fill="none" stroke="#e6e6e6" stroke-width="1.200"/></svg>
<svg style="left:1343px;top:337px;" width="12" height="6" viewBox="0 0 12 6"><g fill="#9a9a9a"><rect x="0" y="0" width="1.400" height="1.400"/><rect x="0" y="3" width="1.400" height="1.400"/><rect x="3" y="0" width="1.400" height="1.400"/><rect x="3" y="3" width="1.400" height="1.400"/><rect x="6" y="0" width="1.400" height="1.400"/><rect x="6" y="3" width="1.400" height="1.400"/><rect x="9" y="0" width="1.400" height="1.400"/><rect x="9" y="3" width="1.400" height="1.400"/></g></svg>
<div style="left:1235px;top:361px;width:99px;height:18px;background:#585858;border-radius:4px;"></div>
<div class="t" style="left:1107px;top:363px;width:120px;text-align:right;color:#e6e6e6;">Angle</div>
<div class="t" style="left:1233.7px;top:363px;width:99px;text-align:center;">360°</div>
<div style="left:1342px;top:368px;width:4px;height:4px;background:#e0e0e0;border-radius:2px;"></div>
<div style="left:1235px;top:383px;width:99px;height:18px;background:#585858;border-radius:4px;"></div>
<div class="t" style="left:1107px;top:385px;width:120px;text-align:right;color:#e6e6e6;">Screw</div>
<div class="t" style="left:1233.7px;top:385px;width:99px;text-align:center;">0 m</div>
<div style="left:1342px;top:390px;width:4px;height:4px;background:#e0e0e0;border-radius:2px;"></div>
<div style="left:1235px;top:405px;width:99px;height:18px;background:#585858;border-radius:4px;"></div>
<div class="t" style="left:1107px;top:407px;width:120px;text-align:right;color:#e6e6e6;">Iterations</div>
<div class="t" style="left:1233.7px;top:407px;width:99px;text-align:center;">1</div>
<div style="left:1342px;top:412px;width:4px;height:4px;background:#e0e0e0;border-radius:2px;"></div>
<div style="left:1235px;top:441px;width:99px;height:18px;background:#585858;border-radius:4px;"></div>
<div style="left:1235px;top:441px;width:32px;height:18px;background:#5680c2;border-radius:4px 0 0 4px;"></div>
<div style="left:1267px;top:441px;width:1px;height:18px;background:#3e3e3e;"></div>
<div style="left:1300px;top:441px;width:1px;height:18px;background:#3e3e3e;"></div>
<div class="t" style="left:1107px;top:443px;width:120px;text-align:right;color:#e6e6e6;">Axis</div>
<div style="left:1342px;top:448px;width:4px;height:4px;background:#e0e0e0;border-radius:2px;"></div>
<div class="t" style="left:1235px;top:443px;width:32px;text-align:center;">X</div>
<div class="t" style="left:1268px;top:443px;width:32px;text-align:center;">Y</div>
<div class="t" style="left:1301px;top:443px;width:32px;text-align:center;">Z</div>
<div class="t" style="left:1107px;top:465px;width:120px;text-align:right;color:#e6e6e6;">Axis Object</div>
<div style="left:1235px;top:463px;width:99px;height:18px;background:#1d1d1d;border-radius:4px;border:1px solid #3a3a3a;"></div>
<svg style="left:1239px;top:464px;" width="16" height="16" viewBox="0 0 16 16"><rect x="4.500" y="4.500" width="7" height="7" fill="#e6e6e6"/><path d="M1.500 4.500v-3h3M11.500 1.500h3v3M14.500 11.500v3h-3M4.500 14.500h-3v-3" fill="none" stroke="#e6e6e6" stroke-width="1.100"/></svg>
<svg style="left:1316px;top:464px;" width="16" height="16" viewBox="0 0 16 16"><path d="M2 14l1-3l6-6l2 2l-6 6z" fill="none" stroke="#e6e6e6" stroke-width="1"/><path d="M8.500 4l3.500 3.500M10 5.500l2-3c1-1 3 1 2 2l-3 2z" fill="#e6e6e6" stroke="#e6e6e6" stroke-width="1"/></svg>
<div style="left:1236px;top:488px;width:12px;height:12px;background:#505050;border-radius:2px;"></div>
<div class="t" style="left:1251px;top:487px;color:#8c8c8c;">Object Screw</div>
<div style="left:1342px;top:492px;width:4px;height:4px;background:#6a6a6a;border-radius:2px;"></div>
<div style="left:1235px;top:521px;width:99px;height:38px;background:#585858;border-radius:4px;"></div>
<div style="left:1235px;top:539.5px;width:99px;height:1px;background:#3e3e3e;"></div>
<div class="t" style="left:1107px;top:523px;width:120px;text-align:right;color:#e6e6e6;">Steps Vie...</div>
<div class="t" style="left:1233.7px;top:523px;width:99px;text-align:center;">16</div>
<div style="left:1342px;top:528px;width:4px;height:4px;background:#e0e0e0;border-radius:2px;"></div>
<div class="t" style="left:1107px;top:542px;width:120px;text-align:right;color:#e6e6e6;">Render</div>
<div class="t" style="left:1233.7px;top:542px;width:99px;text-align:center;">16</div>
<div style="left:1342px;top:547px;width:4px;height:4px;background:#e0e0e0;border-radius:2px;"></div>
<div class="t" style="left:1107px;top:579px;width:120px;text-align:right;color:#e6e6e6;">Merge</div>
<div style="left:1236px;top:580px;width:12px;height:12px;background:#686868;border-radius:2px;"></div>
<div style="left:1255px;top:577px;width:79px;height:18px;background:#4c4c4c;border-radius:4px;"></div>
<div class="t" style="left:1255px;top:579px;width:79px;text-align:center;color:#8f8f8f;">0.01 m</div>
<div style="left:1342px;top:584px;width:4px;height:4px;background:#e0e0e0;border-radius:2px;"></div>
<div class="t" style="left:1170px;top:615px;">Stretch UV</div>
<div style="left:1235px;top:613px;width:99px;height:18px;background:#585858;border-radius:4px;"></div>
<div style="left:1283px;top:613px;width:1px;height:18px;background:#3e3e3e;"></div>
<div class="t" style="left:1235px;top:615px;width:48px;text-align:center;">U</div>
<div class="t" style="left:1284px;top:615px;width:50px;text-align:center;">V</div>
<svg style="left:1184px;top:648px;" width="8" height="9" viewBox="0 0 8 9"><path d="M1 0.500L7.500 4.500L1 8.500z" fill="#b0b0b0"/></svg>
<div class="t" style="left:1198px;top:646px;">Normals</div>
<div style="left:1px;top:659px;width:1126px;height:47.500px;background:#2a2a2a;border-radius:5px;overflow:hidden;">
<div style="left:0px;top:0px;width:1126px;height:25px;background:#3a3a3a;"></div>
<div style="left:120px;top:25px;width:1px;height:24px;background:#323232;"></div>
<div class="t" style="left:99.9px;top:29.600px;width:40px;text-align:center;color:#a8a8a8;letter-spacing:0;">20</div>
<div style="left:204px;top:25px;width:1px;height:24px;background:#323232;"></div>
<div class="t" style="left:183.7px;top:29.600px;width:40px;text-align:center;color:#a8a8a8;letter-spacing:0;">40</div>
<div style="left:287px;top:25px;width:1px;height:24px;background:#323232;"></div>
<div class="t" style="left:267.4px;top:29.600px;width:40px;text-align:center;color:#a8a8a8;letter-spacing:0;">60</div>
<div style="left:371px;top:25px;width:1px;height:24px;background:#323232;"></div>
<div class="t" style="left:351.2px;top:29.600px;width:40px;text-align:center;color:#a8a8a8;letter-spacing:0;">80</div>
<div style="left:455px;top:25px;width:1px;height:24px;background:#323232;"></div>
<div class="t" style="left:434.9px;top:29.600px;width:40px;text-align:center;color:#a8a8a8;letter-spacing:0;">100</div>
<div style="left:539px;top:25px;width:1px;height:24px;background:#323232;"></div>
<div class="t" style="left:518.6px;top:29.600px;width:40px;text-align:center;color:#a8a8a8;letter-spacing:0;">120</div>
<div style="left:622px;top:25px;width:1px;height:24px;background:#323232;"></div>
<div class="t" style="left:602.4px;top:29.600px;width:40px;text-align:center;color:#a8a8a8;letter-spacing:0;">140</div>
<div style="left:706px;top:25px;width:1px;height:24px;background:#323232;"></div>
<div class="t" style="left:686.1px;top:29.600px;width:40px;text-align:center;color:#a8a8a8;letter-spacing:0;">160</div>
<div style="left:790px;top:25px;width:1px;height:24px;background:#323232;"></div>
<div class="t" style="left:769.9px;top:29.600px;width:40px;text-align:center;color:#a8a8a8;letter-spacing:0;">180</div>
<div style="left:874px;top:25px;width:1px;height:24px;background:#323232;"></div>
<div class="t" style="left:853.6px;top:29.600px;width:40px;text-align:center;color:#a8a8a8;letter-spacing:0;">200</div>
<div style="left:957px;top:25px;width:1px;height:24px;background:#323232;"></div>
<div class="t" style="left:937.3px;top:29.600px;width:40px;text-align:center;color:#a8a8a8;letter-spacing:0;">220</div>
<div style="left:1041px;top:25px;width:1px;height:24px;background:#323232;"></div>
<div class="t" style="left:1021.1px;top:29.600px;width:40px;text-align:center;color:#a8a8a8;letter-spacing:0;">240</div>
<div style="left:29px;top:28px;width:24px;height:16px;background:#4f78c0;border-radius:3px;"></div>
<div style="left:40.5px;top:40px;width:2px;height:9px;background:#4f78c0;"></div>
<div class="t" style="left:29px;top:29.500px;width:24px;text-align:center;color:#fff;letter-spacing:0;">1</div>
<div style="left:8px;top:37.2px;width:1110px;height:9px;background:#686868;border-radius:4.500px;"></div>
<div style="left:9.5px;top:38.4px;width:6.6px;height:6.6px;background:#3e3e3e;border-radius:4px;"></div>
<div style="left:1109.9px;top:38.4px;width:6.6px;height:6.6px;background:#3e3e3e;border-radius:4px;"></div>
</div>
<div style="left:9px;top:662.7px;width:30px;height:18.6px;background:#2d2d2d;border-radius:4px;box-shadow:0 0 0 1px rgba(255,255,255,0.075);"></div>
<svg style="left:12px;top:664px;" width="16" height="16" viewBox="0 0 16 16"><circle cx="8" cy="8" r="7" fill="#e6e6e6"/><path d="M9.500 4L5.500 8.500L9.500 12" fill="none" stroke="#2c2c2c" stroke-width="1.600"/></svg>
<svg style="left:28px;top:670px;" width="9" height="6" viewBox="0 0 9 6"><path d="M1 1 L4.5 4.5 L8 1" fill="none" stroke="#e6e6e6" stroke-width="1.3"/></svg>
<div style="left:46px;top:662.7px;width:128px;height:18.6px;background:#2d2d2d;border-radius:4px;box-shadow:0 0 0 1px rgba(255,255,255,0.075);"></div>
<div style="left:114px;top:663px;width:1px;height:18px;background:#454545;"></div>
<div class="t" style="left:52px;top:665px;">Playback</div>
<svg style="left:102px;top:670px;" width="9" height="6" viewBox="0 0 9 6"><path d="M1 1 L4.5 4.5 L8 1" fill="none" stroke="#e6e6e6" stroke-width="1.3"/></svg>
<div class="t" style="left:121px;top:665px;">Keying</div>
<svg style="left:162px;top:670px;" width="9" height="6" viewBox="0 0 9 6"><path d="M1 1 L4.5 4.5 L8 1" fill="none" stroke="#e6e6e6" stroke-width="1.3"/></svg>
<div class="t" style="left:181px;top:665px;">View</div>
<div class="t" style="left:221px;top:665px;">Marker</div>
<div style="left:482px;top:663px;width:18px;height:18px;background:#585858;border-radius:4px;"></div>
<div style="left:487px;top:668px;width:8px;height:8px;background:#e6e6e6;border-radius:4px;"></div>
<div style="left:507px;top:663px;width:118px;height:18px;background:#585858;border-radius:4px;"></div>
<div style="left:525px;top:663px;width:1px;height:18px;background:#3c3c3c;"></div>
<div style="left:545px;top:663px;width:1px;height:18px;background:#3c3c3c;"></div>
<div style="left:565px;top:663px;width:1px;height:18px;background:#3c3c3c;"></div>
<div style="left:585px;top:663px;width:1px;height:18px;background:#3c3c3c;"></div>
<div style="left:605px;top:663px;width:1px;height:18px;background:#3c3c3c;"></div>
<svg style="left:507px;top:663px;" width="118" height="18" viewBox="0 0 118 18"><path d="M4.400 4v10" stroke="#e6e6e6" stroke-width="1.700"/><path d="M14 4v10l-8-5z" fill="#e6e6e6"/>
<path d="M20 9l4-5l4 5l-4 5z" fill="#e6e6e6"/><path d="M35.400 4v10l-6.800-5z" fill="#e6e6e6"/>
<path d="M53 3.500v11l-10.400-5.500z" fill="#e6e6e6"/>
<path d="M63 3.500v11l10.400-5.500z" fill="#e6e6e6"/>
<path d="M80.400 4v10l6.800-5z" fill="#e6e6e6"/><path d="M96 9l-4-5l-4 5l4 5z" fill="#e6e6e6"/>
<path d="M103 4v10l8-5z" fill="#e6e6e6"/><path d="M112.800 4v10" stroke="#e6e6e6" stroke-width="1.700"/></svg>
<div style="left:838px;top:663px;width:73px;height:18px;background:#585858;border-radius:4px;"></div>
<div class="t" style="left:838px;top:665px;width:73px;text-align:center;">1</div>
<div style="left:918px;top:663px;width:190px;height:18px;background:#585858;border-radius:4px;"></div>
<div style="left:936.5px;top:663px;width:1px;height:18px;background:#3e3e3e;"></div>
<div style="left:1024.5px;top:663px;width:1px;height:18px;background:#3e3e3e;"></div>
<svg style="left:920px;top:664px;" width="16" height="16" viewBox="0 0 16 16"><circle cx="7.500" cy="9" r="5.300" fill="none" stroke="#e6e6e6" stroke-width="1.100"/><path d="M7.500 9V5.800M7.500 9l2 1.200M6 1.500h3M7.500 1.500v2M12 3.500l1.500 1.500" stroke="#e6e6e6" stroke-width="1.100" fill="none"/></svg>
<div class="t" style="left:951px;top:665px;">Start</div>
<div class="t" style="left:981px;top:665px;width:30px;text-align:right;">1</div>
<div class="t" style="left:1039px;top:665px;">End</div>
<div class="t" style="left:1062.5px;top:665px;width:32px;text-align:right;">250</div>
<svg style="left:1px;top:700.5px;" width="8" height="8" viewBox="0 0 8 8"><path d="M1 1l5 5" stroke="#6a6a6a" stroke-width="1"/></svg>
<svg style="left:1120px;top:700.5px;" width="8" height="8" viewBox="0 0 8 8"><path d="M6 0.800L2.800 3.800L6 6.800" stroke="#9a9a9a" stroke-width="1" fill="none"/></svg>
<div style="left:0px;top:708px;width:1365px;height:20px;background:#232323;"></div>
<div style="left:0px;top:728px;width:1365px;height:3px;background:#0c0c0c;"></div>
<div style="left:394px;top:728px;width:48px;height:3px;background:#4c4c4c;"></div>
<div class="t" style="left:34px;top:711px;color:#b8b8b8;">Select</div>
<div class="t" style="left:100px;top:711px;color:#b8b8b8;">Box Select</div>
<div class="t" style="left:270px;top:711px;color:#b8b8b8;">Rotate View</div>
<div class="t" style="left:506px;top:711px;color:#b8b8b8;">Curve Context Menu</div>
<div class="t" style="left:1250px;top:711px;width:100px;text-align:right;color:#b8b8b8;">2.90.0</div>
<svg style="left:10.5px;top:710.3px;" width="18" height="16" viewBox="0 0 18 16"><rect x="1.500" y="0.600" width="9.600" height="14" rx="3.800" fill="none" stroke="#c8c8c8" stroke-width="1.100"/><path d="M1.500 7V4.400Q1.500 0.600 5.300 0.600H6.300V7Z" fill="#c8c8c8"/></svg>
<svg style="left:74.5px;top:710.3px;" width="18" height="16" viewBox="0 0 18 16"><rect x="1.500" y="0.600" width="9.600" height="14" rx="3.800" fill="none" stroke="#c8c8c8" stroke-width="1.100"/><path d="M1.500 7V4.400Q1.500 0.600 5.300 0.600H6.300V7Z" fill="#c8c8c8"/><path d="M14.500 0.500v8.200M16.600 3v4.200" stroke="#c8c8c8" stroke-width="0.900" fill="none"/></svg>
<svg style="left:246.5px;top:710.3px;" width="18" height="16" viewBox="0 0 18 16"><rect x="1.500" y="0.600" width="9.600" height="14" rx="3.800" fill="none" stroke="#c8c8c8" stroke-width="1.100"/><rect x="4.900" y="2.600" width="2.800" height="5.400" rx="1.300" fill="#c8c8c8"/></svg>
<svg style="left:483.5px;top:710.3px;" width="18" height="16" viewBox="0 0 18 16"><rect x="1.500" y="0.600" width="9.600" height="14" rx="3.800" fill="none" stroke="#c8c8c8" stroke-width="1.100"/><path d="M11.100 7V4.400Q11.100 0.600 7.300 0.600H6.300V7Z" fill="#c8c8c8"/></svg>
</div></body></html>
